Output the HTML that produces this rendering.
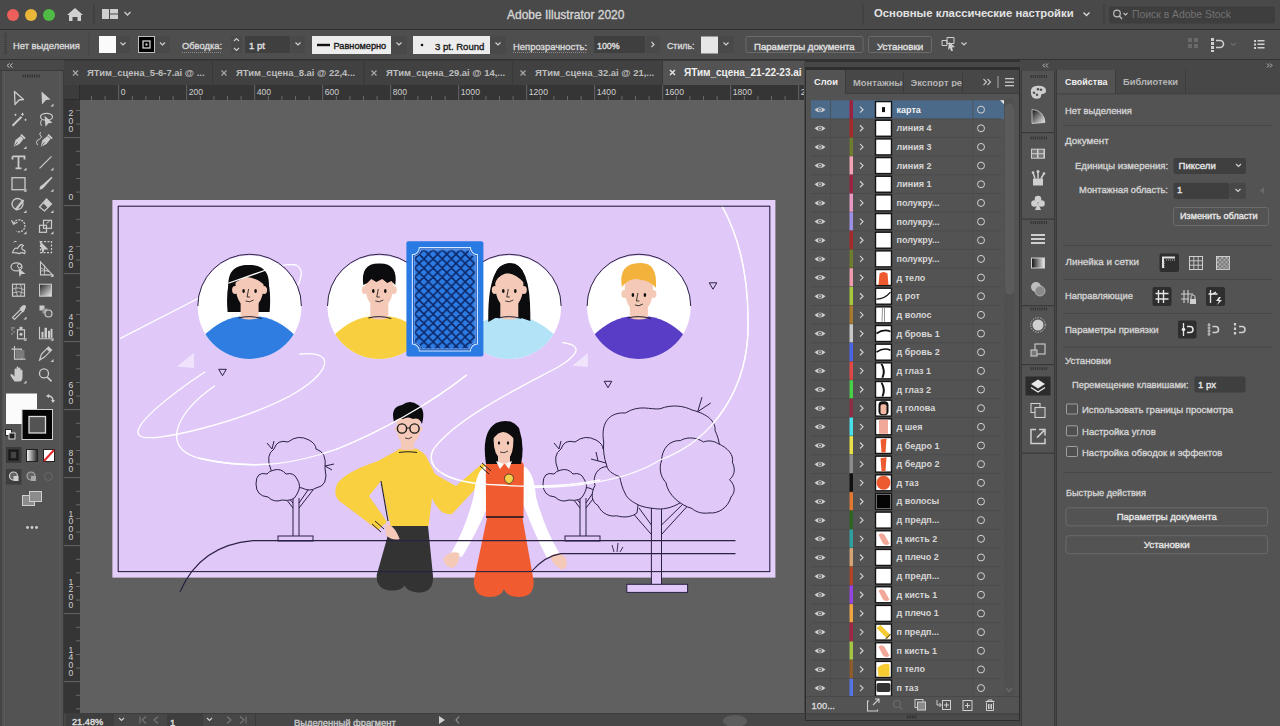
<!DOCTYPE html>
<html><head><meta charset="utf-8">
<style>
*{box-sizing:border-box}
html,body{margin:0;padding:0}
body{width:1280px;height:726px;overflow:hidden;position:relative;background:#535353;font-family:"Liberation Sans",sans-serif;color:#d6d6d6}
.a{position:absolute}
.t{position:absolute;white-space:nowrap;line-height:1}
.b{font-weight:bold}
svg{position:absolute;overflow:visible}
.sw{-webkit-text-stroke:0.35px currentColor}
.chev{position:absolute;width:5px;height:5px;border-right:1.3px solid #cfcfcf;border-bottom:1.3px solid #cfcfcf;transform:rotate(45deg)}
.inp{position:absolute;background:#3f3f3f;border-radius:2px}
.btn{position:absolute;border:1px solid #6a6a6a;border-radius:3px;background:#4c4c4c}
</style></head><body>


<!-- TITLE BAR -->
<div class="a" style="left:0;top:0;width:1280px;height:30px;background:#494949;border-bottom:1px solid #2e2e2e"></div>
<div class="a" style="left:7px;top:9px;width:12px;height:12px;border-radius:50%;background:#ec5f5b"></div>
<div class="a" style="left:25px;top:9px;width:12px;height:12px;border-radius:50%;background:#e8b73a"></div>
<div class="a" style="left:43px;top:9px;width:12px;height:12px;border-radius:50%;background:#4fbb45"></div>
<svg style="left:0;top:0" width="1280" height="30">
  <path d="M67 15 L75 8 L83 15 L81 15 L81 21 L77.5 21 L77.5 17 L72.5 17 L72.5 21 L69 21 L69 15 Z" fill="#d0d0d0"/>
  <rect x="93.5" y="5" width="1" height="20" fill="#3a3a3a"/>
  <rect x="102" y="9" width="7" height="10" fill="#cfcfcf"/>
  <rect x="110" y="9" width="8" height="4.5" fill="#cfcfcf"/>
  <rect x="110" y="14.5" width="8" height="4.5" fill="#cfcfcf"/>
  <path d="M124.5 12 L127.5 15 L130.5 12" stroke="#cfcfcf" stroke-width="1.3" fill="none"/>
  <rect x="862.5" y="4" width="1" height="21" fill="#3c3c3c"/>
  <path d="M1083.5 12.5 L1086.5 15.5 L1089.5 12.5" stroke="#d8d8d8" stroke-width="1.4" fill="none"/>
  <rect x="1103.5" y="4" width="1" height="21" fill="#3c3c3c"/>
  <rect x="1109" y="6.5" width="166" height="17" rx="2" fill="#3e3e3e"/>
  <circle cx="1117" cy="13.5" r="3.3" stroke="#bdbdbd" stroke-width="1.2" fill="none"/>
  <path d="M1119.3 16 L1122 19" stroke="#bdbdbd" stroke-width="1.3"/>
  <path d="M1123.5 13 L1125.5 15 L1127.5 13" stroke="#bdbdbd" stroke-width="1.1" fill="none"/>
</svg>
<div class="t sw" style="left:507px;top:9px;font-size:12px;color:#d4d4d4">Adobe Illustrator 2020</div>
<div class="t b" style="left:874px;top:8px;font-size:11.3px;color:#e2e2e2">Основные классические настройки</div>
<div class="t" style="left:1132px;top:10px;font-size:10.4px;color:#727272">Поиск в Adobe Stock</div>

<!-- CONTROL BAR -->
<div class="a" style="left:0;top:30px;width:1280px;height:29px;background:#4e4e4e"></div>
<svg style="left:0;top:30px" width="1280" height="29">
  <g fill="#3e3e3e"><rect x="4" y="3.0" width="3" height="1.1"/><rect x="4" y="5.2" width="3" height="1.1"/><rect x="4" y="7.4" width="3" height="1.1"/><rect x="4" y="9.6" width="3" height="1.1"/><rect x="4" y="11.8" width="3" height="1.1"/><rect x="4" y="14.0" width="3" height="1.1"/><rect x="4" y="16.2" width="3" height="1.1"/><rect x="4" y="18.4" width="3" height="1.1"/><rect x="4" y="20.6" width="3" height="1.1"/><rect x="4" y="22.8" width="3" height="1.1"/></g>
  <rect x="88.5" y="3" width="1" height="23" fill="#444"/>
  <!-- fill swatch -->
  <rect x="99" y="6" width="17" height="17" fill="#fafafa"/>
  <rect x="116" y="6" width="14" height="17" fill="#494949"/>
  <path d="M120.5 12.5 L123 15 L125.5 12.5" stroke="#cfcfcf" stroke-width="1.2" fill="none"/>
  <!-- stroke swatch -->
  <rect x="138.5" y="6.5" width="16" height="16" fill="#000" stroke="#bdbdbd" stroke-width="1"/>
  <rect x="143" y="11" width="7" height="7" fill="none" stroke="#e0e0e0" stroke-width="1.2"/>
  <rect x="145.5" y="13.5" width="2" height="2" fill="#e0e0e0"/>
  <rect x="155" y="6" width="15" height="17" fill="#494949"/>
  <path d="M160 12.5 L162.5 15 L165 12.5" stroke="#cfcfcf" stroke-width="1.2" fill="none"/>
  <!-- Обводка underline -->
  <line x1="182" y1="22.5" x2="222" y2="22.5" stroke="#8a8a8a" stroke-width="1" stroke-dasharray="1 1"/>
  <!-- stepper -->
  <rect x="231" y="6" width="11" height="17" fill="#494949"/>
  <path d="M234 11 L236.5 8.5 L239 11 M234 18 L236.5 20.5 L239 18" stroke="#cfcfcf" stroke-width="1.1" fill="none"/>
  <rect x="245" y="6" width="45" height="17" fill="#3f3f3f"/>
  <rect x="291" y="6" width="14" height="17" fill="#494949"/>
  <path d="M295.5 12.5 L298 15 L300.5 12.5" stroke="#cfcfcf" stroke-width="1.2" fill="none"/>
  <!-- Равномерно -->
  <rect x="312" y="6" width="79" height="18" fill="#ececec"/>
  <rect x="317" y="13.8" width="13" height="2.4" fill="#111"/>
  <rect x="391" y="6" width="16" height="18" fill="#494949"/>
  <path d="M396.5 12.5 L399 15 L401.5 12.5" stroke="#cfcfcf" stroke-width="1.2" fill="none"/>
  <!-- 3 pt round -->
  <rect x="413" y="6" width="77" height="18" fill="#ececec"/>
  <circle cx="422" cy="15" r="1.3" fill="#111"/>
  <rect x="490" y="6" width="16" height="18" fill="#494949"/>
  <path d="M495.5 12.5 L498 15 L500.5 12.5" stroke="#cfcfcf" stroke-width="1.2" fill="none"/>
  <line x1="513" y1="22.5" x2="587" y2="22.5" stroke="#8a8a8a" stroke-width="1" stroke-dasharray="1 1"/>
  <rect x="594" y="6" width="51" height="17" fill="#3f3f3f"/>
  <rect x="646" y="6" width="14" height="17" fill="#494949"/>
  <path d="M651.5 12 L654 14.5 L651.5 17" stroke="#cfcfcf" stroke-width="1.2" fill="none"/>
  <!-- style -->
  <rect x="701" y="6.5" width="17" height="17" fill="#e6e6e6"/>
  <rect x="718" y="6" width="16" height="17" fill="#494949"/>
  <path d="M723.5 12.5 L726 15 L728.5 12.5" stroke="#cfcfcf" stroke-width="1.2" fill="none"/>
  <!-- buttons -->
  <rect x="746" y="6.5" width="117" height="16" rx="2" fill="none" stroke="#6b6b6b"/>
  <rect x="868.5" y="6.5" width="63" height="16" rx="2" fill="none" stroke="#6b6b6b"/>
  <!-- icon -->
  <path d="M942 10.5 h5 v5 h-5z M947 7.5 h7 v6 h-7z" stroke="#cfcfcf" stroke-width="1" fill="none"/>
  <path d="M949 12 L955 17 L952 17.5 L953 21 L951 21 L950 18 L948 20 Z" fill="#cfcfcf"/>
  <path d="M961.5 12.5 L964 15 L966.5 12.5" stroke="#cfcfcf" stroke-width="1.2" fill="none"/>
  <!-- right icons -->
  <g fill="#6a6a6a"><rect x="1188" y="8" width="4" height="4"/><rect x="1194" y="8" width="4" height="4"/><rect x="1188" y="14" width="4" height="4"/><rect x="1194" y="14" width="4" height="4"/></g>
  <g fill="#cfcfcf"><rect x="1211" y="8" width="3" height="3"/><rect x="1211" y="12" width="3" height="3"/><rect x="1211" y="16" width="3" height="3"/><rect x="1211" y="20" width="3" height="2"/></g>
  <path d="M1216 10.5 h4 a3.5 3.5 0 0 1 0 7 h-4" stroke="#cfcfcf" stroke-width="1.6" fill="none"/>
  <path d="M1231 13 L1233.5 15.5 L1236 13" stroke="#6a6a6a" stroke-width="1.2" fill="none"/>
  <g fill="#cfcfcf"><rect x="1254" y="10" width="2" height="2"/><rect x="1254" y="13.5" width="2" height="2"/><rect x="1254" y="17" width="2" height="2"/><rect x="1257.5" y="10" width="7" height="1.5"/><rect x="1257.5" y="13.5" width="7" height="1.5"/><rect x="1257.5" y="17" width="7" height="1.5"/></g>
</svg>
<div class="t sw" style="left:13px;top:40.5px;font-size:9.4px;color:#d8d8d8">Нет выделения</div>
<div class="t sw" style="left:182px;top:41.5px;font-size:9.35px;color:#d8d8d8">Обводка:</div>
<div class="t sw" style="left:249px;top:41px;font-size:9.5px;color:#e0e0e0">1 pt</div>
<div class="t sw" style="left:333.5px;top:41.5px;font-size:9.2px;color:#1a1a1a">Равномерно</div>
<div class="t sw" style="left:435px;top:41.5px;font-size:9.55px;color:#1a1a1a">3 pt. Round</div>
<div class="t sw" style="left:513px;top:41.5px;font-size:9.45px;color:#d8d8d8">Непрозрачность:</div>
<div class="t sw" style="left:597px;top:41.5px;font-size:8.9px;color:#e0e0e0">100%</div>
<div class="t sw" style="left:667px;top:41.5px;font-size:8.8px;color:#d8d8d8">Стиль:</div>
<div class="t sw" style="left:754px;top:41.5px;font-size:9.6px;color:#e0e0e0">Параметры документа</div>
<div class="t sw" style="left:877px;top:41.5px;font-size:9.85px;color:#e0e0e0">Установки</div>


<!-- dark strip -->
<div class="a" style="left:0;top:59px;width:1280px;height:3px;background:#323232"></div>
<div class="a" style="left:0;top:60px;width:64px;height:666px;background:#535353;border-left:2px solid #454545;border-right:1px solid #3c3c3c"></div>
<div class="a" style="left:0;top:60px;width:64px;height:11px;background:#484848;border-bottom:1px solid #3a3a3a"></div>
<div class="a" style="left:4px;top:71px;width:1px;height:655px;background:#5a5a5a"></div>
<div class="a" style="left:59px;top:71px;width:1px;height:655px;background:#5a5a5a"></div>
<svg style="left:0;top:0" width="64" height="726"><path d="M9.5 63.5 L7 65.5 L9.5 67.5 M12.5 63.5 L10 65.5 L12.5 67.5" stroke="#bdbdbd" stroke-width="1" fill="none"/><rect x="22.5" y="74.5" width="1.1" height="3" fill="#2e2e2e"/><rect x="24.8" y="74.5" width="1.1" height="3" fill="#2e2e2e"/><rect x="27.1" y="74.5" width="1.1" height="3" fill="#2e2e2e"/><rect x="29.4" y="74.5" width="1.1" height="3" fill="#2e2e2e"/><rect x="31.7" y="74.5" width="1.1" height="3" fill="#2e2e2e"/><rect x="34.0" y="74.5" width="1.1" height="3" fill="#2e2e2e"/><rect x="36.3" y="74.5" width="1.1" height="3" fill="#2e2e2e"/><rect x="38.6" y="74.5" width="1.1" height="3" fill="#2e2e2e"/><path d="M14.5 91.5 L23.5 99.5 L19.0 100.0 L15.0 104.5 Z" stroke="#cbcbcb" stroke-width="1.3" fill="none" stroke-linejoin="round"/><path d="M41.5 91.5 L50.5 99.5 L46.0 100.0 L42.0 104.5 Z" fill="#cbcbcb"/><path d="M50.5 106.5 L53.5 106.5 L53.5 103.5 Z" fill="#cbcbcb"/><path d="M12.5 125.8 L21.5 116.8" stroke="#cbcbcb" stroke-width="2"/><path d="M22.5 112.8 v3 M21.0 114.3 h3 M15.5 113.8 v2 M14.5 114.8 h2 M25.5 118.8 v2 M24.5 119.8 h2" stroke="#cbcbcb" stroke-width="1"/><ellipse cx="46.5" cy="116.8" rx="6" ry="3.5" stroke="#cbcbcb" stroke-width="1.2" fill="none"/><path d="M44.5 115.8 L52.5 122.8 L48.5 123.3 L45.5 126.8 Z" fill="#cbcbcb"/><path d="M41.5 119.8 q-2 3 0 6" stroke="#cbcbcb" stroke-width="1" fill="none"/><path d="M13.5 147.1 L15.5 140.1 L20.5 136.1 L23.5 139.1 L19.5 144.1 Z" fill="#cbcbcb"/><path d="M21.0 134.6 L25.0 138.6" stroke="#cbcbcb" stroke-width="2"/><path d="M13.5 147.1 L17.5 142.1" stroke="#535353" stroke-width="0.8"/><path d="M40.5 147.1 L42.5 140.1 L47.5 136.1 L50.5 139.1 L46.5 144.1 Z" fill="#cbcbcb"/><path d="M48.0 134.6 L52.0 138.6" stroke="#cbcbcb" stroke-width="2"/><path d="M40.5 147.1 L44.5 142.1" stroke="#535353" stroke-width="0.8"/><path d="M23.5 149.1 L26.5 149.1 L26.5 146.1 Z" fill="#cbcbcb"/><path d="M41.5 137.1 q-3 -3 -1 -5 M41.5 137.1 q-2 3 -4 3 q-2 2 0 5" stroke="#cbcbcb" stroke-width="1" fill="none"/><path d="M12.5 156.4 h12 v3 M12.5 156.4 v3 M18.5 156.4 v12 M15.5 168.4 h6" stroke="#cbcbcb" stroke-width="1.8" fill="none"/><path d="M23.5 170.4 L26.5 170.4 L26.5 167.4 Z" fill="#cbcbcb"/><path d="M39.5 168.4 L51.5 156.4" stroke="#cbcbcb" stroke-width="1.3"/><path d="M50.5 170.4 L53.5 170.4 L53.5 167.4 Z" fill="#cbcbcb"/><rect x="12.0" y="177.7" width="13" height="12" stroke="#cbcbcb" stroke-width="1.3" fill="#5a5a5a"/><path d="M23.5 191.7 L26.5 191.7 L26.5 188.7 Z" fill="#cbcbcb"/><path d="M39.5 189.7 q0 -4 3 -5 L51.5 176.7 L52.5 177.7 L44.5 186.7 q-2 3 -5 3z" fill="#cbcbcb"/><path d="M50.5 191.7 L53.5 191.7 L53.5 188.7 Z" fill="#cbcbcb"/><circle cx="17.5" cy="204" r="5.5" stroke="#cbcbcb" stroke-width="1.3" fill="#5a5a5a"/><path d="M15.5 210 L23.5 200" stroke="#cbcbcb" stroke-width="2.2"/><path d="M23.5 213 L26.5 213 L26.5 210 Z" fill="#cbcbcb"/><path d="M39.5 207 L46.5 199 L51.5 204 L44.5 211 Z" stroke="#cbcbcb" stroke-width="1.2" fill="none"/><path d="M43.0 203 L46.5 199 L51.5 204 L48.0 208 Z" fill="#cbcbcb"/><path d="M50.5 213 L53.5 213 L53.5 210 Z" fill="#cbcbcb"/><path d="M13.5 223.3 A6 6 0 1 1 16.5 231.3" stroke="#cbcbcb" stroke-width="1.3" fill="none" stroke-dasharray="2 1"/><path d="M11.5 220.3 L13.5 224.3 L17.5 222.3" stroke="#cbcbcb" stroke-width="1.2" fill="none"/><path d="M23.5 234.3 L26.5 234.3 L26.5 231.3 Z" fill="#cbcbcb"/><rect x="39.5" y="225.3" width="7" height="7" stroke="#cbcbcb" stroke-width="1.2" fill="none"/><rect x="43.5" y="220.3" width="8" height="8" stroke="#cbcbcb" stroke-width="1.2" fill="none"/><path d="M46.5 223.3 L49.5 221.3" stroke="#cbcbcb" stroke-width="1"/><path d="M50.5 234.3 L53.5 234.3 L53.5 231.3 Z" fill="#cbcbcb"/><path d="M12.5 252.6 q2 -6 5 -4 q3 -6 6 -3 q-3 2 -1 4 q4 1 2 4 q-3 -2 -5 0 q-2 -1 -7 -1z" stroke="#cbcbcb" stroke-width="1.2" fill="none"/><path d="M16.5 241.6 q-2 -1 -3 1" stroke="#cbcbcb" stroke-width="1" fill="none"/><rect x="40.5" y="241.6" width="11" height="11" stroke="#cbcbcb" stroke-width="1.2" fill="none" stroke-dasharray="2 1.5"/><path d="M39.5 240.6 L48.5 249.6 L44.5 249.6 L42.5 253.6 Z" fill="#cbcbcb"/><ellipse cx="16.5" cy="266.9" rx="5.5" ry="4" stroke="#cbcbcb" stroke-width="1.2" fill="none"/><circle cx="19.5" cy="265.9" r="2" stroke="#cbcbcb" stroke-width="1" fill="none"/><path d="M18.5 267.9 L25.5 273.9 L21.5 273.9 L19.5 276.9 Z" fill="#cbcbcb"/><path d="M40.5 261.9 L40.5 274.9 L52.5 274.9 Z" stroke="#cbcbcb" stroke-width="1.1" fill="none"/><path d="M40.5 267.9 L49.5 271.9 M44.5 264.9 v10 M40.5 270.9 h8" stroke="#cbcbcb" stroke-width="0.8"/><path d="M50.5 276.9 L53.5 276.9 L53.5 273.9 Z" fill="#cbcbcb"/><rect x="12.5" y="284.2" width="12" height="12" stroke="#cbcbcb" stroke-width="1.2" fill="none"/><path d="M12.5 289.2 q6 -3 12 1 M12.5 293.2 q6 -3 12 0 M16.5 284.2 q-2 6 1 12 M20.5 284.2 q3 6 0 12" stroke="#cbcbcb" stroke-width="0.8" fill="none"/><defs><linearGradient id="tg" x1="0" y1="0" x2="1" y2="1"><stop offset="0" stop-color="#222"/><stop offset="1" stop-color="#eee"/></linearGradient></defs><rect x="39.5" y="284.2" width="12" height="12" stroke="#cbcbcb" stroke-width="1" fill="url(#tg)"/><path d="M12.5 317.5 L20.5 309.5 L22.5 311.5 L14.5 319.5 Z" stroke="#cbcbcb" stroke-width="1.1" fill="none"/><path d="M19.5 308.5 L22.5 305.5 q2 -1 3 0 q1 1 0 3 L23.5 312.5Z" fill="#cbcbcb"/><path d="M23.5 319.5 L26.5 319.5 L26.5 316.5 Z" fill="#cbcbcb"/><rect x="39.5" y="305.5" width="5" height="5" fill="#cbcbcb"/><rect x="42.5" y="308.5" width="5" height="5" fill="#9a9a9a"/><circle cx="48.5" cy="313.5" r="3.5" stroke="#cbcbcb" stroke-width="1.2" fill="#5a5a5a"/><rect x="17.5" y="329.8" width="7" height="9" stroke="#cbcbcb" stroke-width="1.2" fill="none"/><circle cx="21.0" cy="334.3" r="1.5" fill="#cbcbcb"/><rect x="19.5" y="326.8" width="3" height="3" fill="#cbcbcb"/><path d="M11.5 327.8 h1 M13.5 327.8 h1 M11.5 329.8 h1 M13.5 331.8 h1 M11.5 333.8 h1" stroke="#cbcbcb" stroke-width="1.2"/><path d="M23.5 340.8 L26.5 340.8 L26.5 337.8 Z" fill="#cbcbcb"/><path d="M39.5 326.8 v12 h13" stroke="#cbcbcb" stroke-width="1.1" fill="none"/><rect x="41.5" y="331.8" width="2" height="6" fill="#cbcbcb"/><rect x="44.5" y="327.8" width="2.5" height="10" fill="#cbcbcb"/><rect x="48.0" y="330.8" width="2" height="7" fill="#cbcbcb"/><rect x="50.5" y="328.8" width="2" height="9" fill="#cbcbcb"/><path d="M50.5 340.8 L53.5 340.8 L53.5 337.8 Z" fill="#cbcbcb"/><path d="M14.5 346.1 v13 h11 M11.5 349.1 h10 v10" stroke="#cbcbcb" stroke-width="1.1" fill="none"/><rect x="15.5" y="350.1" width="9" height="8" fill="#7a7a7a"/><path d="M39.5 360.1 L41.5 354.1 L48.5 347.1 L51.5 350.1 L44.5 357.1 Z" stroke="#cbcbcb" stroke-width="1.2" fill="none"/><path d="M46.5 349.1 L49.5 352.1 L51.5 350.1 L48.5 347.1Z" fill="#cbcbcb"/><path d="M50.5 362.1 L53.5 362.1 L53.5 359.1 Z" fill="#cbcbcb"/><path d="M14.5 381.4 q-3 -4 -4 -6 q0 -2 2 -1 l2 2 v-7 q1 -2 2 0 v5 v-7 q1 -2 2 0 v7 v-6 q1 -2 2 0 v6 v-4 q1 -2 2 0 v6 q0 5 -3 5z" fill="#cbcbcb"/><path d="M23.5 383.4 L26.5 383.4 L26.5 380.4 Z" fill="#cbcbcb"/><circle cx="44.0" cy="373.4" r="4.5" stroke="#cbcbcb" stroke-width="1.3" fill="none"/><path d="M47.0 376.9 L51.5 381.4" stroke="#cbcbcb" stroke-width="1.6"/><rect x="6" y="393.5" width="31" height="30.5" fill="#fbfbfb"/><rect x="22" y="409.5" width="30.5" height="30" fill="#050505" stroke="#cfcfcf" stroke-width="1"/><rect x="29" y="416.5" width="16.5" height="16.5" fill="#535353" stroke="#dcdcdc" stroke-width="1.3"/><path d="M48 396 q5 0 5 5" stroke="#cfcfcf" stroke-width="1.3" fill="none"/><path d="M46 396 l3 -2 v4z M53 403 l-2 -3 h4z" fill="#cfcfcf"/><rect x="5.5" y="429.5" width="6" height="6" fill="#fff" stroke="#222" stroke-width="1"/><rect x="9" y="433" width="6" height="6" fill="#222" stroke="#ddd" stroke-width="1"/><rect x="6" y="447" width="15.5" height="16" fill="#3a3a3a"/><rect x="9" y="450" width="9" height="10" fill="#222" stroke="#111"/><rect x="11" y="452" width="5" height="6" fill="#444"/><defs><linearGradient id="tg2" x1="0" y1="0" x2="1" y2="0"><stop offset="0" stop-color="#fff"/><stop offset="1" stop-color="#222"/></linearGradient></defs><rect x="26.5" y="449.5" width="11" height="12" fill="url(#tg2)" stroke="#222" stroke-width="1"/><rect x="43.5" y="449.5" width="11" height="12" fill="#fff" stroke="#222" stroke-width="1"/><path d="M44 461 L54 450" stroke="#e0282e" stroke-width="2"/><rect x="6" y="469" width="15.5" height="15.5" fill="#3e3e3e"/><circle cx="13.5" cy="476" r="4" stroke="#cfcfcf" stroke-width="1.2" fill="#666"/><rect x="13.5" y="476" width="5" height="5" fill="#cfcfcf"/><circle cx="31" cy="476" r="4" stroke="#a8a8a8" stroke-width="1.2" fill="#666"/><rect x="31" y="476" width="5" height="5" fill="#a8a8a8"/><circle cx="48.5" cy="476.5" r="4" stroke="#6a6a6a" stroke-width="1" fill="none"/><rect x="22.5" y="495.5" width="12" height="10" fill="#8c8c8c" stroke="#cfcfcf" stroke-width="1"/><rect x="29.5" y="491.5" width="12" height="10" fill="#8c8c8c" stroke="#cfcfcf" stroke-width="1"/><circle cx="27.5" cy="527.5" r="1.4" fill="#d0d0d0"/><circle cx="32" cy="527.5" r="1.4" fill="#d0d0d0"/><circle cx="36.5" cy="527.5" r="1.4" fill="#d0d0d0"/></svg>
<div class="a" style="left:64px;top:60px;width:741px;height:25px;background:#414141;border-top:1px solid #3a3a3a"></div>
<div class="a" style="left:662px;top:61px;width:143px;height:24px;background:#535353"></div>
<div class="t b" style="left:87px;top:68px;font-size:9.45px;color:#bdbdbd">ЯТим_сцена_5-6-7.ai @ ...</div>
<div class="t b" style="left:236px;top:68px;font-size:9.45px;color:#bdbdbd">ЯТим_сцена_8.ai @ 22,4...</div>
<div class="t b" style="left:386px;top:68px;font-size:9.45px;color:#bdbdbd">ЯТим_сцена_29.ai @ 14,...</div>
<div class="t b" style="left:535px;top:68px;font-size:9.45px;color:#bdbdbd">ЯТим_сцена_32.ai @ 21,...</div>
<div class="t b" style="left:684px;top:67.5px;font-size:10px;color:#efefef">ЯТим_сцена_21-22-23.ai</div>
<svg style="left:0;top:0" width="1280" height="100"><path d="M73.0 70.5 L78.0 75.5 M78.0 70.5 L73.0 75.5" stroke="#a8a8a8" stroke-width="1.2"/><rect x="212.0" y="61" width="1" height="24" fill="#383838"/><path d="M221.5 70.5 L226.5 75.5 M226.5 70.5 L221.5 75.5" stroke="#a8a8a8" stroke-width="1.2"/><rect x="363.5" y="61" width="1" height="24" fill="#383838"/><path d="M371.5 70.5 L376.5 75.5 M376.5 70.5 L371.5 75.5" stroke="#a8a8a8" stroke-width="1.2"/><rect x="512.0" y="61" width="1" height="24" fill="#383838"/><path d="M520.5 70.5 L525.5 75.5 M525.5 70.5 L520.5 75.5" stroke="#a8a8a8" stroke-width="1.2"/><rect x="662.0" y="61" width="1" height="24" fill="#383838"/><path d="M670 70 L675 75 M675 70 L670 75" stroke="#e8e8e8" stroke-width="1.4"/></svg>
<div class="a" style="left:64px;top:85px;width:741px;height:15px;background:#353535"></div>
<div class="a" style="left:64px;top:85px;width:16px;height:628px;background:#353535"></div>
<div class="a" style="left:64px;top:85px;width:16px;height:15px;background:#3c3c3c;border-right:1px solid #2c2c2c;border-bottom:1px solid #2c2c2c"></div>
<div class="t" style="left:120.8px;top:88px;font-size:8.6px;color:#d0d0d0">0</div>
<div class="t" style="left:188.8px;top:88px;font-size:8.6px;color:#d0d0d0">200</div>
<div class="t" style="left:256.8px;top:88px;font-size:8.6px;color:#d0d0d0">400</div>
<div class="t" style="left:324.8px;top:88px;font-size:8.6px;color:#d0d0d0">600</div>
<div class="t" style="left:392.8px;top:88px;font-size:8.6px;color:#d0d0d0">800</div>
<div class="t" style="left:460.8px;top:88px;font-size:8.6px;color:#d0d0d0">1000</div>
<div class="t" style="left:528.8px;top:88px;font-size:8.6px;color:#d0d0d0">1200</div>
<div class="t" style="left:596.8px;top:88px;font-size:8.6px;color:#d0d0d0">1400</div>
<div class="t" style="left:664.8px;top:88px;font-size:8.6px;color:#d0d0d0">1600</div>
<div class="t" style="left:732.8px;top:88px;font-size:8.6px;color:#d0d0d0">1800</div>
<div class="t" style="left:800.8px;top:88px;font-size:8.6px;color:#d0d0d0">2000</div>
<div class="a" style="left:67px;top:110.4px;width:8px;font-size:8.6px;line-height:7.6px;color:#d0d0d0;text-align:center">2<br>0<br>0</div>
<div class="a" style="left:67px;top:193.6px;width:8px;font-size:8.6px;line-height:7.6px;color:#d0d0d0;text-align:center">0</div>
<div class="a" style="left:67px;top:246.4px;width:8px;font-size:8.6px;line-height:7.6px;color:#d0d0d0;text-align:center">2<br>0<br>0</div>
<div class="a" style="left:67px;top:314.4px;width:8px;font-size:8.6px;line-height:7.6px;color:#d0d0d0;text-align:center">4<br>0<br>0</div>
<div class="a" style="left:67px;top:382.4px;width:8px;font-size:8.6px;line-height:7.6px;color:#d0d0d0;text-align:center">6<br>0<br>0</div>
<div class="a" style="left:67px;top:450.4px;width:8px;font-size:8.6px;line-height:7.6px;color:#d0d0d0;text-align:center">8<br>0<br>0</div>
<div class="a" style="left:67px;top:510.8px;width:8px;font-size:8.6px;line-height:7.6px;color:#d0d0d0;text-align:center">1<br>0<br>0<br>0</div>
<div class="a" style="left:67px;top:578.8px;width:8px;font-size:8.6px;line-height:7.6px;color:#d0d0d0;text-align:center">1<br>2<br>0<br>0</div>
<div class="a" style="left:67px;top:646.8px;width:8px;font-size:8.6px;line-height:7.6px;color:#d0d0d0;text-align:center">1<br>4<br>0<br>0</div>
<svg style="left:0;top:0" width="1280" height="726"><rect x="91.05" y="96" width="0.9" height="4" fill="#707070"/><rect x="104.65" y="96" width="0.9" height="4" fill="#707070"/><rect x="118.25" y="85" width="0.9" height="15" fill="#6a6a6a"/><rect x="131.85" y="96" width="0.9" height="4" fill="#707070"/><rect x="145.45" y="96" width="0.9" height="4" fill="#707070"/><rect x="159.05" y="96" width="0.9" height="4" fill="#707070"/><rect x="172.65" y="96" width="0.9" height="4" fill="#707070"/><rect x="186.25" y="85" width="0.9" height="15" fill="#6a6a6a"/><rect x="199.85" y="96" width="0.9" height="4" fill="#707070"/><rect x="213.45" y="96" width="0.9" height="4" fill="#707070"/><rect x="227.05" y="96" width="0.9" height="4" fill="#707070"/><rect x="240.65" y="96" width="0.9" height="4" fill="#707070"/><rect x="254.25" y="85" width="0.9" height="15" fill="#6a6a6a"/><rect x="267.85" y="96" width="0.9" height="4" fill="#707070"/><rect x="281.45" y="96" width="0.9" height="4" fill="#707070"/><rect x="295.05" y="96" width="0.9" height="4" fill="#707070"/><rect x="308.65" y="96" width="0.9" height="4" fill="#707070"/><rect x="322.25" y="85" width="0.9" height="15" fill="#6a6a6a"/><rect x="335.85" y="96" width="0.9" height="4" fill="#707070"/><rect x="349.45" y="96" width="0.9" height="4" fill="#707070"/><rect x="363.05" y="96" width="0.9" height="4" fill="#707070"/><rect x="376.65" y="96" width="0.9" height="4" fill="#707070"/><rect x="390.25" y="85" width="0.9" height="15" fill="#6a6a6a"/><rect x="403.85" y="96" width="0.9" height="4" fill="#707070"/><rect x="417.45" y="96" width="0.9" height="4" fill="#707070"/><rect x="431.05" y="96" width="0.9" height="4" fill="#707070"/><rect x="444.65" y="96" width="0.9" height="4" fill="#707070"/><rect x="458.25" y="85" width="0.9" height="15" fill="#6a6a6a"/><rect x="471.85" y="96" width="0.9" height="4" fill="#707070"/><rect x="485.45" y="96" width="0.9" height="4" fill="#707070"/><rect x="499.05" y="96" width="0.9" height="4" fill="#707070"/><rect x="512.65" y="96" width="0.9" height="4" fill="#707070"/><rect x="526.25" y="85" width="0.9" height="15" fill="#6a6a6a"/><rect x="539.85" y="96" width="0.9" height="4" fill="#707070"/><rect x="553.45" y="96" width="0.9" height="4" fill="#707070"/><rect x="567.05" y="96" width="0.9" height="4" fill="#707070"/><rect x="580.65" y="96" width="0.9" height="4" fill="#707070"/><rect x="594.25" y="85" width="0.9" height="15" fill="#6a6a6a"/><rect x="607.85" y="96" width="0.9" height="4" fill="#707070"/><rect x="621.45" y="96" width="0.9" height="4" fill="#707070"/><rect x="635.05" y="96" width="0.9" height="4" fill="#707070"/><rect x="648.65" y="96" width="0.9" height="4" fill="#707070"/><rect x="662.25" y="85" width="0.9" height="15" fill="#6a6a6a"/><rect x="675.85" y="96" width="0.9" height="4" fill="#707070"/><rect x="689.45" y="96" width="0.9" height="4" fill="#707070"/><rect x="703.05" y="96" width="0.9" height="4" fill="#707070"/><rect x="716.65" y="96" width="0.9" height="4" fill="#707070"/><rect x="730.25" y="85" width="0.9" height="15" fill="#6a6a6a"/><rect x="743.85" y="96" width="0.9" height="4" fill="#707070"/><rect x="757.45" y="96" width="0.9" height="4" fill="#707070"/><rect x="771.05" y="96" width="0.9" height="4" fill="#707070"/><rect x="784.65" y="96" width="0.9" height="4" fill="#707070"/><rect x="798.25" y="85" width="0.9" height="15" fill="#6a6a6a"/><rect x="76" y="110.00" width="4" height="0.9" fill="#707070"/><rect x="76" y="123.60" width="4" height="0.9" fill="#707070"/><rect x="64" y="137.20" width="16" height="0.9" fill="#6a6a6a"/><rect x="76" y="150.80" width="4" height="0.9" fill="#707070"/><rect x="76" y="164.40" width="4" height="0.9" fill="#707070"/><rect x="76" y="178.00" width="4" height="0.9" fill="#707070"/><rect x="76" y="191.60" width="4" height="0.9" fill="#707070"/><rect x="64" y="205.20" width="16" height="0.9" fill="#6a6a6a"/><rect x="76" y="218.80" width="4" height="0.9" fill="#707070"/><rect x="76" y="232.40" width="4" height="0.9" fill="#707070"/><rect x="76" y="246.00" width="4" height="0.9" fill="#707070"/><rect x="76" y="259.60" width="4" height="0.9" fill="#707070"/><rect x="64" y="273.20" width="16" height="0.9" fill="#6a6a6a"/><rect x="76" y="286.80" width="4" height="0.9" fill="#707070"/><rect x="76" y="300.40" width="4" height="0.9" fill="#707070"/><rect x="76" y="314.00" width="4" height="0.9" fill="#707070"/><rect x="76" y="327.60" width="4" height="0.9" fill="#707070"/><rect x="64" y="341.20" width="16" height="0.9" fill="#6a6a6a"/><rect x="76" y="354.80" width="4" height="0.9" fill="#707070"/><rect x="76" y="368.40" width="4" height="0.9" fill="#707070"/><rect x="76" y="382.00" width="4" height="0.9" fill="#707070"/><rect x="76" y="395.60" width="4" height="0.9" fill="#707070"/><rect x="64" y="409.20" width="16" height="0.9" fill="#6a6a6a"/><rect x="76" y="422.80" width="4" height="0.9" fill="#707070"/><rect x="76" y="436.40" width="4" height="0.9" fill="#707070"/><rect x="76" y="450.00" width="4" height="0.9" fill="#707070"/><rect x="76" y="463.60" width="4" height="0.9" fill="#707070"/><rect x="64" y="477.20" width="16" height="0.9" fill="#6a6a6a"/><rect x="76" y="490.80" width="4" height="0.9" fill="#707070"/><rect x="76" y="504.40" width="4" height="0.9" fill="#707070"/><rect x="76" y="518.00" width="4" height="0.9" fill="#707070"/><rect x="76" y="531.60" width="4" height="0.9" fill="#707070"/><rect x="64" y="545.20" width="16" height="0.9" fill="#6a6a6a"/><rect x="76" y="558.80" width="4" height="0.9" fill="#707070"/><rect x="76" y="572.40" width="4" height="0.9" fill="#707070"/><rect x="76" y="586.00" width="4" height="0.9" fill="#707070"/><rect x="76" y="599.60" width="4" height="0.9" fill="#707070"/><rect x="64" y="613.20" width="16" height="0.9" fill="#6a6a6a"/><rect x="76" y="626.80" width="4" height="0.9" fill="#707070"/><rect x="76" y="640.40" width="4" height="0.9" fill="#707070"/><rect x="76" y="654.00" width="4" height="0.9" fill="#707070"/><rect x="76" y="667.60" width="4" height="0.9" fill="#707070"/><rect x="64" y="681.20" width="16" height="0.9" fill="#6a6a6a"/><rect x="76" y="694.80" width="4" height="0.9" fill="#707070"/><rect x="76" y="708.40" width="4" height="0.9" fill="#707070"/></svg>
<div class="a" style="left:80px;top:100px;width:725px;height:613px;background:#606060"></div>
<div class="a" style="left:64px;top:713px;width:741px;height:13px;background:#474747;border-top:1px solid #3c3c3c"></div>
<svg style="left:0;top:0" width="1280" height="726"><rect x="66" y="714" width="48" height="12" fill="#3e3e3e"/><path d="M119 718 L121.5 720.5 L124 718" stroke="#cfcfcf" stroke-width="1.1" fill="none"/><path d="M140 716.5 v7 M146 716.5 L142 720 L146 723.5 M158 716.5 L154 720 L158 723.5" stroke="#777" stroke-width="1.1" fill="none"/><rect x="167" y="714" width="36" height="12" fill="#3e3e3e"/><path d="M207 718 L209.5 720.5 L212 718" stroke="#cfcfcf" stroke-width="1.1" fill="none"/><path d="M227 716.5 L231 720 L227 723.5 M240 716.5 L244 720 L240 723.5 M246 716.5 v7" stroke="#777" stroke-width="1.1" fill="none"/><rect x="255" y="714" width="1" height="12" fill="#3a3a3a"/><path d="M439 716 L445 720 L439 724 Z" fill="#d0d0d0"/><path d="M459 716.5 L456 720 L459 723.5" stroke="#999" stroke-width="1.1" fill="none"/><ellipse cx="735" cy="721" rx="12" ry="6" fill="#5d5d5d"/></svg>
<div class="t sw" style="left:72px;top:718px;font-size:9.2px;color:#e0e0e0">21.48%</div>
<div class="t sw" style="left:170px;top:718px;font-size:9.5px;color:#e0e0e0">1</div>
<div class="t sw" style="left:294px;top:718px;font-size:9.4px;color:#c8c8c8">Выделенный фрагмент</div>
<svg style="left:0;top:0" width="1280" height="726"><defs><clipPath id="c0"><circle cx="249.6" cy="307.2" r="51.8"/></clipPath><clipPath id="c1"><circle cx="379.3" cy="307.2" r="51.8"/></clipPath><clipPath id="c2"><circle cx="509.3" cy="307.2" r="51.8"/></clipPath><clipPath id="c3"><circle cx="638.9" cy="307.2" r="51.8"/></clipPath><pattern id="lat" width="9.2" height="9.2" patternUnits="userSpaceOnUse" x="410" y="245"><rect width="9.2" height="9.2" fill="#2b7be4"/><path d="M0 0 L9.2 9.2 M9.2 0 L0 9.2 M-1 8.2 L1 10.2 M8.2 -1 L10.2 1 M-1 1 L1 -1 M8.2 10.2 L10.2 8.2" stroke="#0c2463" stroke-width="1.5"/></pattern></defs><rect x="112.4" y="200" width="663" height="377.6" fill="#e4cffa"/><rect x="118.2" y="206.2" width="651.6" height="365.4" fill="#e0c8f9"/><path d="M120.4 338.3 L199 298" stroke="#ffffff" stroke-width="1.3" fill="none" stroke-linecap="round"/><path d="M229 283 L266 270 Q286 263 296 265 Q306 270 297 287" stroke="#ffffff" stroke-width="1.3" fill="none" stroke-linecap="round"/><path d="M204.8 372 C170 395 128 428 140 436 C152 444 240 422 290 396 C330 374 338 350 300 354" stroke="#ffffff" stroke-width="1.3" fill="none" stroke-linecap="round"/><path d="M214.6 386 C180 410 158 446 198 458 C258 472 300 462 337 449 C380 432 430 404 466.3 375.3" stroke="#ffffff" stroke-width="1.3" fill="none" stroke-linecap="round"/><path d="M562.6 342.6 C582 345 580 353 560 366 C525 385 455 418 433 450 C424 470 450 484 500 485 C560 492 625 482 660 460 C715 440 750 385 748 320 C748 270 738 235 722 206" stroke="#ffffff" stroke-width="1.3" fill="none" stroke-linecap="round"/><path d="M177 366.4 L193.9 353.1 L193.9 368 Z" fill="#efe4fc"/><path d="M572.4 365.7 L587.8 353.1 L587.8 367.1 Z" fill="#efe4fc"/><path d="M218.7 369.3 L226.3 369.3 L222.5 375.7 Z" stroke="#2b2142" stroke-width="1" fill="none" stroke-linejoin="round"/><path d="M604.2 381.3 L611.8 381.3 L608 387.7 Z" stroke="#2b2142" stroke-width="1" fill="none" stroke-linejoin="round"/><path d="M709.2 282.8 L716.8 282.8 L713 289.2 Z" stroke="#2b2142" stroke-width="1" fill="none" stroke-linejoin="round"/><circle cx="249.6" cy="307.2" r="51.8" fill="#ffffff"/><g clip-path="url(#c0)"><path d="M191.6 350 Q213.6 320 239.6 316.5 L259.6 316.5 Q285.6 320 307.6 350 L311.6 372 L187.6 372 Z" fill="#2f7de1"/><path d="M227.6 312 Q223.6 266 248.6 265 Q273.6 265 269.6 312 Z" fill="#0c0c0f"/><path d="M240.6 298 L258.6 298 L258.6 318 Q249.6 321 240.6 318 Z" fill="#f5c9b7"/><path d="M238.6 318 Q249.6 315 261.6 318.5" stroke="#1d1d2b" stroke-width="1" fill="none"/><path d="M235.6 280 Q234.6 302 245.6 307 Q249.6 309 253.6 307 Q264.6 302 263.6 280 Q249.6 266 235.6 280 Z" fill="#f5c9b7"/><ellipse cx="235.1" cy="290" rx="3" ry="4" fill="#f5c9b7"/><ellipse cx="264.1" cy="290" rx="3" ry="4" fill="#f5c9b7"/><path d="M228.6 290 Q225.6 264 249.6 265 Q271.6 265 268.6 290 Q259.6 278 246.6 277 Q235.6 280 228.6 290Z" fill="#0c0c0f"/><ellipse cx="243.6" cy="291" rx="1.3" ry="2" fill="#111"/><ellipse cx="255.6" cy="291" rx="1.3" ry="2" fill="#111"/><path d="M248.6 289 L247.1 297 L250.1 297" stroke="#111" stroke-width="0.8" fill="none"/><path d="M245.6 301 Q249.6 303 253.6 300" stroke="#111" stroke-width="0.8" fill="none"/></g><path d="M197.8 306 A51.8 51.8 0 0 1 301.4 306" stroke="#2b2142" stroke-width="1" fill="none"/><circle cx="379.3" cy="307.2" r="51.8" fill="#ffffff"/><g clip-path="url(#c1)"><path d="M321.3 350 Q343.3 320 369.3 316.5 L389.3 316.5 Q415.3 320 437.3 350 L441.3 372 L317.3 372 Z" fill="#f8cf3e"/><path d="M370.3 298 L388.3 298 L388.3 318 Q379.3 321 370.3 318 Z" fill="#f5c9b7"/><path d="M368.3 318 Q379.3 315 391.3 318.5" stroke="#1d1d2b" stroke-width="1" fill="none"/><path d="M365.3 280 Q364.3 302 375.3 307 Q379.3 309 383.3 307 Q394.3 302 393.3 280 Q379.3 266 365.3 280 Z" fill="#f5c9b7"/><ellipse cx="364.8" cy="290" rx="3" ry="4" fill="#f5c9b7"/><ellipse cx="393.8" cy="290" rx="3" ry="4" fill="#f5c9b7"/><path d="M363.3 285 Q360.3 263 379.3 263.5 Q398.3 263 395.3 285 L391.3 281 L387.3 283 L382.3 279 L376.3 282 L371.3 279 L367.3 283 Z" fill="#0c0c0f"/><ellipse cx="373.3" cy="291" rx="1.3" ry="2" fill="#111"/><ellipse cx="385.3" cy="291" rx="1.3" ry="2" fill="#111"/><path d="M378.3 289 L376.8 297 L379.8 297" stroke="#111" stroke-width="0.8" fill="none"/><path d="M375.3 301 Q379.3 303 383.3 300" stroke="#111" stroke-width="0.8" fill="none"/></g><path d="M327.5 306 A51.8 51.8 0 0 1 431.1 306" stroke="#2b2142" stroke-width="1" fill="none"/><circle cx="509.3" cy="307.2" r="51.8" fill="#ffffff"/><g clip-path="url(#c2)"><path d="M451.3 350 Q473.3 320 499.3 316.5 L519.3 316.5 Q545.3 320 567.3 350 L571.3 372 L447.3 372 Z" fill="#b2e3f7"/><path d="M488.3 322 Q487.3 263 510.3 263 Q531.3 263 530.3 321 L521.3 318 L495.3 318 Z" fill="#0c0c0f"/><path d="M500.3 298 L518.3 298 L518.3 318 Q509.3 321 500.3 318 Z" fill="#f5c9b7"/><path d="M498.3 318 Q509.3 315 521.3 318.5" stroke="#1d1d2b" stroke-width="1" fill="none"/><path d="M495.3 280 Q494.3 302 505.3 307 Q509.3 309 513.3 307 Q524.3 302 523.3 280 Q509.3 266 495.3 280 Z" fill="#f5c9b7"/><ellipse cx="494.8" cy="290" rx="3" ry="4" fill="#f5c9b7"/><ellipse cx="523.8" cy="290" rx="3" ry="4" fill="#f5c9b7"/><path d="M494.3 285 Q493.3 264 509.3 264 Q525.3 264 524.3 283 Q515.3 273 505.3 273 Q497.3 276 494.3 285Z" fill="#0c0c0f"/><ellipse cx="503.3" cy="291" rx="1.3" ry="2" fill="#111"/><ellipse cx="515.3" cy="291" rx="1.3" ry="2" fill="#111"/><path d="M508.3 289 L506.8 297 L509.8 297" stroke="#111" stroke-width="0.8" fill="none"/><path d="M505.3 301 Q509.3 303 513.3 300" stroke="#111" stroke-width="0.8" fill="none"/></g><path d="M457.5 306 A51.8 51.8 0 0 1 561.1 306" stroke="#2b2142" stroke-width="1" fill="none"/><circle cx="638.9" cy="307.2" r="51.8" fill="#ffffff"/><g clip-path="url(#c3)"><path d="M580.9 350 Q602.9 320 628.9 316.5 L648.9 316.5 Q674.9 320 696.9 350 L700.9 372 L576.9 372 Z" fill="#5a3dc6"/><path d="M629.9 298 L647.9 298 L647.9 318 Q638.9 321 629.9 318 Z" fill="#f5c9b7"/><path d="M627.9 318 Q638.9 315 650.9 318.5" stroke="#1d1d2b" stroke-width="1" fill="none"/><path d="M624.9 284 Q623.9 306 634.9 311 Q638.9 313 642.9 311 Q653.9 306 652.9 284 Q638.9 270 624.9 284 Z" fill="#f5c9b7"/><ellipse cx="624.4" cy="294" rx="3" ry="4" fill="#f5c9b7"/><ellipse cx="653.4" cy="294" rx="3" ry="4" fill="#f5c9b7"/><path d="M621.9 287 Q617.9 263 639.9 263 Q657.9 262 655.9 288 Q648.9 280 640.9 280 Q630.9 276 621.9 287Z" fill="#f3b23c"/><ellipse cx="632.9" cy="295" rx="1.3" ry="2" fill="#111"/><ellipse cx="644.9" cy="295" rx="1.3" ry="2" fill="#111"/><path d="M637.9 293 L636.4 301 L639.4 301" stroke="#111" stroke-width="0.8" fill="none"/><path d="M634.9 305 Q638.9 307 642.9 304" stroke="#111" stroke-width="0.8" fill="none"/></g><path d="M587.1 306 A51.8 51.8 0 0 1 690.6999999999999 306" stroke="#2b2142" stroke-width="1" fill="none"/><path d="M229 283 L266 270" stroke="#ffffff" stroke-width="1.3" fill="none" stroke-linecap="round"/><rect x="406.4" y="241.2" width="77" height="115.3" rx="2" fill="#2a7ae3"/><path d="M419.4 247.6 L470.4 247.6 A7 7 0 0 0 477.4 254.6 L477.4 344 A7 7 0 0 0 470.4 351 L419.4 351 A7 7 0 0 0 412.4 344 L412.4 254.6 A7 7 0 0 0 419.4 247.6 Z" fill="#1d5cc4" stroke="#d5eaff" stroke-width="1.1"/><path d="M420.6 249.8 L469.2 249.8 A6 6 0 0 0 475.2 255.8 L475.2 342.8 A6 6 0 0 0 469.2 348.8 L420.6 348.8 A6 6 0 0 0 414.6 342.8 L414.6 255.8 A6 6 0 0 0 420.6 249.8 Z" fill="url(#lat)" stroke="#9cc8ff" stroke-width="0.6"/><path d="M293 536 L293 498 M299 536 L299 498 M293 508 L283 495 M293 503 L287 496 M299 503 L310 487 M299 508 L313 490" stroke="#2b2142" stroke-width="1" fill="none"/><path d="M271 470 Q265 455 274 449 Q277 439 288 442 Q298 434 309 440 Q316 444 316 449 Q327 452 325 468 Q329 486 316 488 Q310 492 302 488 Q280 486 271 470 Z" fill="#e0c8f9" stroke="#2b2142" stroke-width="1"/><path d="M267 474 Q256 471 256 484 Q256 496 268 497 Q274 503 282 500 Q294 502 297 494 Q302 486 297 479 Q294 472 286 474 Q281 468 274 470 Q269 471 267 474 Z" fill="#e0c8f9" stroke="#2b2142" stroke-width="1"/><path d="M272 449 L267 443 M272 449 L274 441 M325 466 L334 464 M325 466 L332 470" stroke="#2b2142" stroke-width="1" fill="none"/><rect x="278" y="536" width="35" height="5" fill="#e0c8f9" stroke="#2b2142" stroke-width="1"/><path d="M580 536 L580 498 M586 536 L586 498 M580 508 L570 495 M580 503 L574 496 M586 503 L597 487 M586 508 L600 490" stroke="#2b2142" stroke-width="1" fill="none"/><path d="M558 470 Q552 455 561 449 Q564 439 575 442 Q585 434 596 440 Q603 444 603 449 Q614 452 612 468 Q616 486 603 488 Q597 492 589 488 Q567 486 558 470 Z" fill="#e0c8f9" stroke="#2b2142" stroke-width="1"/><path d="M554 474 Q543 471 543 484 Q543 496 555 497 Q561 503 569 500 Q581 502 584 494 Q589 486 584 479 Q581 472 573 474 Q568 468 561 470 Q556 471 554 474 Z" fill="#e0c8f9" stroke="#2b2142" stroke-width="1"/><path d="M559 449 L554 443 M559 449 L561 441 M612 466 L621 464 M612 466 L619 470" stroke="#2b2142" stroke-width="1" fill="none"/><rect x="565" y="536" width="35" height="5" fill="#e0c8f9" stroke="#2b2142" stroke-width="1"/><path d="M651.4 534.5 L632.6 512.9 M651.4 525 L639 508 M661.5 534.5 L690.5 502.7 M661.5 525 L684 503" stroke="#2b2142" stroke-width="1" fill="none"/><rect x="651.4" y="506" width="10.1" height="78.5" fill="#e0c8f9" stroke="#2b2142" stroke-width="1"/><path d="M608 466.6 C598 466 592 476 595 485.4 C590 495 592 502 598 505.6 C602 514 610 517 616.7 515.8 C624 518 632 517 637 512.9 L640 490 L620 470 Z" fill="#e0c8f9" stroke="#2b2142" stroke-width="1"/><path d="M603.7 442 C600 420 612 412 625.4 413 C640 404 650 410 660 408.8 C672 404 684 406 692 410 C708 414 716 422 715 430.5 C725 450 720 480 700 495 C692 500 686 502 680.3 502.7 C672 508 662 510 654.3 508.5 C648 508 644 507 639.9 505.6 C632 502 627 498 625.4 494 C622 488 621 482 619.6 476.7 C612 474 607 470 606.6 465 C604 458 603 450 603.7 442 Z" fill="#e0c8f9" stroke="#2b2142" stroke-width="1"/><path d="M661.5 460.8 C662 448 670 440 680.3 440.6 C688 436 698 438 703.5 442 C708 440 714 441 718 443.5 C728 448 734 455 732.4 462.3 C736 470 734 476 729.5 479.6 C736 486 735 493 731 497 C728 508 718 514 709 512.9 C702 514 696 512 692 508.5 C680 505 668 495 665.9 482.5 C660 476 659 468 661.5 460.8 Z" fill="#e0c8f9" stroke="#2b2142" stroke-width="1"/><path d="M697.7 411.7 L702 397.2 M697.7 411.7 L710.7 403 M606 463 L591 459 M598 461 L596 452" stroke="#2b2142" stroke-width="1" fill="none"/><rect x="626.8" y="584.3" width="60.8" height="8.1" fill="#e0c8f9" stroke="#2b2142" stroke-width="1"/><path d="M500 485 C560 492 625 482 660 460 C715 440 750 385 748 320 C748 270 738 235 722 206" stroke="#ffffff" stroke-width="1.3" fill="none" stroke-linecap="round" opacity="0.95"/><path d="M198 458 C258 472 300 462 337 449" stroke="#ffffff" stroke-width="1.3" fill="none" stroke-linecap="round" opacity="0.95"/><path d="M390.5 526 L428 526 L433 576 Q434 593 418 592.5 Q407 592 404.6 585.6 Q401 591 391 590.5 Q376 590 376.7 575 Z" fill="#333333"/><path d="M398 450 L378 461 Q345 472 337 484 Q332 497 342 503 L378 530 L387 522 L369 496 L381 481 L390.5 526 L428.5 526 L432 498 Q440 516 452 514 L480 484 L489 468 L483 463 L456 486 Q445 480 435 474 L426 456 Q422 451 418 450 Z" fill="#f9d03f"/><path d="M381 481 L388 521" stroke="#222" stroke-width="1.1"/><path d="M372 524 L381 532 M375 521 L384 529" stroke="#222" stroke-width="1"/><path d="M385 524 Q394 524 399.7 539 Q392 541 386 535 Z" fill="#f5c9b7"/><path d="M398 449 Q408 447 418 449 L418 454 L398 454 Z" fill="#f9d03f"/><path d="M399 452.5 Q408 451 417 452.5" stroke="#222" stroke-width="1.1" fill="none"/><path d="M401 436 L401 450 L414 450 L414 436 Z" fill="#f5c9b7"/><path d="M396.5 412 L420.5 412 L420 432 Q418 443 408 445 Q398 443 397 432 Z" fill="#f5c9b7"/><circle cx="397" cy="429" r="2.5" fill="#f5c9b7"/><circle cx="420" cy="429" r="2.5" fill="#f5c9b7"/><path d="M394 422 Q390 407 402 405 Q410 399 418 405 Q426 409 422 424 Q419 417 413 419 Q408 416 403 419 Q398 417 394 422 Z" fill="#0c0c0f"/><path d="M337 449 C380 432 430 404 466.3 375.3" stroke="#ffffff" stroke-width="1.3" fill="none" stroke-linecap="round"/><circle cx="402" cy="428.5" r="4.6" stroke="#1a1a1a" stroke-width="1.4" fill="none"/><circle cx="414.5" cy="428.5" r="4.6" stroke="#1a1a1a" stroke-width="1.4" fill="none"/><path d="M406.5 428 h3.5" stroke="#1a1a1a" stroke-width="1"/><path d="M405 438 Q409 440 412 437" stroke="#222" stroke-width="0.8" fill="none"/><path d="M486 466 Q476 470 474 495 Q466 528 450.5 554 L462 557 Q478 530 487 508 Z" fill="#ffffff"/><path d="M523 466 Q534 470 536 497 Q545 530 560.4 555 L547 558 Q534 533 523 504 Z" fill="#ffffff"/><path d="M443 559 Q449 550 459 553 Q461 564 452 568 Q445 567 443 559 Z" fill="#f5c9b7"/><path d="M550 556 Q559 550 566 558 Q569 568 562 569.7 Q553 566 550 556 Z" fill="#f5c9b7"/><path d="M487 518 L522.5 518 L533.5 580 Q535 597 519 597 Q507 597 504 589 Q501 597 490 597 Q473 597 474 580 Z" fill="#f05b30"/><path d="M485.8 466 Q486 461 492 461 L517 461 Q523.8 461 523.8 466 L523.5 516 L486 516 Z" fill="#f05b30"/><path d="M486 517 L523.5 517" stroke="#4a2420" stroke-width="1.8"/><path d="M486 464 Q481 432 496 423 Q510 417 519 428 Q525 446 521 464 Z" fill="#0c0c0f"/><path d="M498 452 L510 452 L510 464 L498 464 Z" fill="#f5c9b7"/><path d="M496 461 L504 464 L500 469 Z M512 461 L505 464 L509 469 Z" fill="#ffffff"/><path d="M493.7 438 Q493 455 502 459.7 Q504 460.5 507 459.7 Q514 455 513.3 438 Q503 426 493.7 438 Z" fill="#f5c9b7"/><path d="M491 442 Q490 424 503 423 Q516 423 516 440 Q510 431 503 431 Q495 432 491 442 Z" fill="#0c0c0f"/><ellipse cx="499" cy="443" rx="1.1" ry="1.7" fill="#111"/><ellipse cx="508" cy="443" rx="1.1" ry="1.7" fill="#111"/><path d="M500 452 Q504 454 508 451" stroke="#222" stroke-width="0.8" fill="none"/><path d="M505 476 Q509 472 513 476 Q515 481 509 484 Q503 481 505 476 Z" fill="#f7d04a" stroke="#222" stroke-width="0.7"/><path d="M482 463 L491 471 M480 466 L489 474" stroke="#222" stroke-width="1"/><path d="M433 450 C424 470 450 484 500 485 C540 488 570 486 600 480" stroke="#ffffff" stroke-width="1.3" fill="none" stroke-linecap="round"/><path d="M253 540.6 L735.5 540.6 M561 553.6 L735.5 553.6" stroke="#2b2142" stroke-width="1.1" fill="none"/><path d="M180 592 Q200 545 253 540.6" stroke="#2b2142" stroke-width="1.1" fill="none"/><path d="M532 571 Q545 556 561 553.6" stroke="#2b2142" stroke-width="1.1" fill="none"/><path d="M614 552 L612 545 M617 552 L618 543 M620 552 L623 547" stroke="#2b2142" stroke-width="0.9"/><rect x="118.2" y="206.2" width="651.6" height="365.4" fill="none" stroke="#2b2142" stroke-width="1.1"/></svg>
<div class="a" style="left:804px;top:62px;width:216px;height:664px;background:#474747"></div>
<div class="a" style="left:805px;top:67px;width:215px;height:654px;background:#2e2e2e"></div>
<div class="a" style="left:806px;top:70px;width:213px;height:650px;background:#535353"></div>
<div class="a" style="left:806px;top:70px;width:213px;height:24px;background:#474747;border-bottom:1px solid #3d3d3d"></div>
<div class="a" style="left:806px;top:70px;width:39px;height:24px;background:#535353"></div>
<div class="t b" style="left:814px;top:77.5px;font-size:9.3px;color:#f0f0f0">Слои</div>
<div class="t b" style="left:853px;top:77.5px;font-size:9.4px;color:#b4b4b4;width:50px;overflow:hidden">Монтажные</div>
<div class="t b" style="left:910.5px;top:77.5px;font-size:9.4px;color:#b4b4b4;width:52px;overflow:hidden">Экспорт ресурсов</div>
<svg style="left:0;top:0" width="1280" height="726"><rect x="903" y="72" width="1" height="21" fill="#3c3c3c"/><rect x="962" y="72" width="1" height="21" fill="#3c3c3c"/><rect x="845" y="70" width="1" height="24" fill="#3c3c3c"/><path d="M983.5 79 L986.5 82 L983.5 85 M987.5 79 L990.5 82 L987.5 85" stroke="#c8c8c8" stroke-width="1.1" fill="none"/><rect x="997.5" y="76" width="1" height="12" fill="#a8a8a8"/><rect x="1005" y="78" width="9" height="1.3" fill="#c8c8c8"/><rect x="1005" y="81.5" width="9" height="1.3" fill="#c8c8c8"/><rect x="1005" y="85" width="9" height="1.3" fill="#c8c8c8"/><rect x="811" y="100.30" width="193" height="18.66" fill="#4b6a8a"/><path d="M1000 100.30 L1004 100.30 L1004 104.30 Z" fill="#e8e8e8"/><path d="M814.5 109.63 Q820 104.63 825.5 109.63 Q820 114.63 814.5 109.63 Z" fill="#cfcfcf"/><circle cx="820" cy="109.63" r="1.9" fill="#4b6a8a"/><circle cx="820" cy="109.63" r="0.9" fill="#cfcfcf"/><rect x="830" y="100.30" width="0.8" height="18.66" fill="#4c4c4c"/><rect x="849.5" y="100.30" width="3.5" height="18.86" fill="#9c2340"/><path d="M860 106.63 L863 109.63 L860 112.63" stroke="#d0d0d0" stroke-width="1.2" fill="none"/><rect x="875.5" y="101.60" width="16" height="16" fill="#fff" stroke="#141414" stroke-width="1.4"/><rect x="882.0" y="107.10" width="3" height="5" fill="#111"/><rect x="972.5" y="100.30" width="0.8" height="18.66" fill="#4c4c4c"/><circle cx="981" cy="109.63" r="3.5" stroke="#d2d2d2" stroke-width="1" fill="none"/><rect x="811" y="118.46" width="190" height="0.8" fill="#4a4a4a"/><path d="M814.5 128.29 Q820 123.29 825.5 128.29 Q820 133.29 814.5 128.29 Z" fill="#cfcfcf"/><circle cx="820" cy="128.29" r="1.9" fill="#535353"/><circle cx="820" cy="128.29" r="0.9" fill="#cfcfcf"/><rect x="830" y="118.96" width="0.8" height="18.66" fill="#4c4c4c"/><rect x="849.5" y="118.96" width="3.5" height="18.86" fill="#a52a2a"/><path d="M860 125.29 L863 128.29 L860 131.29" stroke="#d0d0d0" stroke-width="1.2" fill="none"/><rect x="875.5" y="120.26" width="16" height="16" fill="#fff" stroke="#141414" stroke-width="1.4"/><rect x="972.5" y="118.96" width="0.8" height="18.66" fill="#4c4c4c"/><circle cx="981" cy="128.29" r="3.5" stroke="#d2d2d2" stroke-width="1" fill="none"/><rect x="811" y="137.12" width="190" height="0.8" fill="#4a4a4a"/><path d="M814.5 146.95 Q820 141.95 825.5 146.95 Q820 151.95 814.5 146.95 Z" fill="#cfcfcf"/><circle cx="820" cy="146.95" r="1.9" fill="#535353"/><circle cx="820" cy="146.95" r="0.9" fill="#cfcfcf"/><rect x="830" y="137.62" width="0.8" height="18.66" fill="#4c4c4c"/><rect x="849.5" y="137.62" width="3.5" height="18.86" fill="#6e7d2e"/><path d="M860 143.95 L863 146.95 L860 149.95" stroke="#d0d0d0" stroke-width="1.2" fill="none"/><rect x="875.5" y="138.92" width="16" height="16" fill="#fff" stroke="#141414" stroke-width="1.4"/><rect x="972.5" y="137.62" width="0.8" height="18.66" fill="#4c4c4c"/><circle cx="981" cy="146.95" r="3.5" stroke="#d2d2d2" stroke-width="1" fill="none"/><rect x="811" y="155.78" width="190" height="0.8" fill="#4a4a4a"/><path d="M814.5 165.61 Q820 160.61 825.5 165.61 Q820 170.61 814.5 165.61 Z" fill="#cfcfcf"/><circle cx="820" cy="165.61" r="1.9" fill="#535353"/><circle cx="820" cy="165.61" r="0.9" fill="#cfcfcf"/><rect x="830" y="156.28" width="0.8" height="18.66" fill="#4c4c4c"/><rect x="849.5" y="156.28" width="3.5" height="18.86" fill="#f2a3b6"/><path d="M860 162.61 L863 165.61 L860 168.61" stroke="#d0d0d0" stroke-width="1.2" fill="none"/><rect x="875.5" y="157.58" width="16" height="16" fill="#fff" stroke="#141414" stroke-width="1.4"/><rect x="972.5" y="156.28" width="0.8" height="18.66" fill="#4c4c4c"/><circle cx="981" cy="165.61" r="3.5" stroke="#d2d2d2" stroke-width="1" fill="none"/><rect x="811" y="174.44" width="190" height="0.8" fill="#4a4a4a"/><path d="M814.5 184.27 Q820 179.27 825.5 184.27 Q820 189.27 814.5 184.27 Z" fill="#cfcfcf"/><circle cx="820" cy="184.27" r="1.9" fill="#535353"/><circle cx="820" cy="184.27" r="0.9" fill="#cfcfcf"/><rect x="830" y="174.94" width="0.8" height="18.66" fill="#4c4c4c"/><rect x="849.5" y="174.94" width="3.5" height="18.86" fill="#9b2445"/><path d="M860 181.27 L863 184.27 L860 187.27" stroke="#d0d0d0" stroke-width="1.2" fill="none"/><rect x="875.5" y="176.24" width="16" height="16" fill="#fff" stroke="#141414" stroke-width="1.4"/><rect x="972.5" y="174.94" width="0.8" height="18.66" fill="#4c4c4c"/><circle cx="981" cy="184.27" r="3.5" stroke="#d2d2d2" stroke-width="1" fill="none"/><rect x="811" y="193.10" width="190" height="0.8" fill="#4a4a4a"/><path d="M814.5 202.93 Q820 197.93 825.5 202.93 Q820 207.93 814.5 202.93 Z" fill="#cfcfcf"/><circle cx="820" cy="202.93" r="1.9" fill="#535353"/><circle cx="820" cy="202.93" r="0.9" fill="#cfcfcf"/><rect x="830" y="193.60" width="0.8" height="18.66" fill="#4c4c4c"/><rect x="849.5" y="193.60" width="3.5" height="18.86" fill="#e89ac4"/><path d="M860 199.93 L863 202.93 L860 205.93" stroke="#d0d0d0" stroke-width="1.2" fill="none"/><rect x="875.5" y="194.90" width="16" height="16" fill="#fff" stroke="#141414" stroke-width="1.4"/><rect x="972.5" y="193.60" width="0.8" height="18.66" fill="#4c4c4c"/><circle cx="981" cy="202.93" r="3.5" stroke="#d2d2d2" stroke-width="1" fill="none"/><rect x="811" y="211.76" width="190" height="0.8" fill="#4a4a4a"/><path d="M814.5 221.59 Q820 216.59 825.5 221.59 Q820 226.59 814.5 221.59 Z" fill="#cfcfcf"/><circle cx="820" cy="221.59" r="1.9" fill="#535353"/><circle cx="820" cy="221.59" r="0.9" fill="#cfcfcf"/><rect x="830" y="212.26" width="0.8" height="18.66" fill="#4c4c4c"/><rect x="849.5" y="212.26" width="3.5" height="18.86" fill="#9b8fe8"/><path d="M860 218.59 L863 221.59 L860 224.59" stroke="#d0d0d0" stroke-width="1.2" fill="none"/><rect x="875.5" y="213.56" width="16" height="16" fill="#fff" stroke="#141414" stroke-width="1.4"/><rect x="972.5" y="212.26" width="0.8" height="18.66" fill="#4c4c4c"/><circle cx="981" cy="221.59" r="3.5" stroke="#d2d2d2" stroke-width="1" fill="none"/><rect x="811" y="230.42" width="190" height="0.8" fill="#4a4a4a"/><path d="M814.5 240.25 Q820 235.25 825.5 240.25 Q820 245.25 814.5 240.25 Z" fill="#cfcfcf"/><circle cx="820" cy="240.25" r="1.9" fill="#535353"/><circle cx="820" cy="240.25" r="0.9" fill="#cfcfcf"/><rect x="830" y="230.92" width="0.8" height="18.66" fill="#4c4c4c"/><rect x="849.5" y="230.92" width="3.5" height="18.86" fill="#a52a2a"/><path d="M860 237.25 L863 240.25 L860 243.25" stroke="#d0d0d0" stroke-width="1.2" fill="none"/><rect x="875.5" y="232.22" width="16" height="16" fill="#fff" stroke="#141414" stroke-width="1.4"/><rect x="972.5" y="230.92" width="0.8" height="18.66" fill="#4c4c4c"/><circle cx="981" cy="240.25" r="3.5" stroke="#d2d2d2" stroke-width="1" fill="none"/><rect x="811" y="249.08" width="190" height="0.8" fill="#4a4a4a"/><path d="M814.5 258.91 Q820 253.91 825.5 258.91 Q820 263.91 814.5 258.91 Z" fill="#cfcfcf"/><circle cx="820" cy="258.91" r="1.9" fill="#535353"/><circle cx="820" cy="258.91" r="0.9" fill="#cfcfcf"/><rect x="830" y="249.58" width="0.8" height="18.66" fill="#4c4c4c"/><rect x="849.5" y="249.58" width="3.5" height="18.86" fill="#6e7d2e"/><path d="M860 255.91 L863 258.91 L860 261.91" stroke="#d0d0d0" stroke-width="1.2" fill="none"/><rect x="875.5" y="250.88" width="16" height="16" fill="#fff" stroke="#141414" stroke-width="1.4"/><rect x="972.5" y="249.58" width="0.8" height="18.66" fill="#4c4c4c"/><circle cx="981" cy="258.91" r="3.5" stroke="#d2d2d2" stroke-width="1" fill="none"/><rect x="811" y="267.74" width="190" height="0.8" fill="#4a4a4a"/><path d="M814.5 277.57 Q820 272.57 825.5 277.57 Q820 282.57 814.5 277.57 Z" fill="#cfcfcf"/><circle cx="820" cy="277.57" r="1.9" fill="#535353"/><circle cx="820" cy="277.57" r="0.9" fill="#cfcfcf"/><rect x="830" y="268.24" width="0.8" height="18.66" fill="#4c4c4c"/><rect x="849.5" y="268.24" width="3.5" height="18.86" fill="#f09ab0"/><path d="M860 274.57 L863 277.57 L860 280.57" stroke="#d0d0d0" stroke-width="1.2" fill="none"/><rect x="875.5" y="269.54" width="16" height="16" fill="#fff" stroke="#141414" stroke-width="1.4"/><path d="M878.5 285.04 L879.5 273.54 Q883.5 270.54 887.5 273.54 L888.5 285.04Z" fill="#ee5a30"/><rect x="972.5" y="268.24" width="0.8" height="18.66" fill="#4c4c4c"/><circle cx="981" cy="277.57" r="3.5" stroke="#d2d2d2" stroke-width="1" fill="none"/><rect x="811" y="286.40" width="190" height="0.8" fill="#4a4a4a"/><path d="M814.5 296.23 Q820 291.23 825.5 296.23 Q820 301.23 814.5 296.23 Z" fill="#cfcfcf"/><circle cx="820" cy="296.23" r="1.9" fill="#535353"/><circle cx="820" cy="296.23" r="0.9" fill="#cfcfcf"/><rect x="830" y="286.90" width="0.8" height="18.66" fill="#4c4c4c"/><rect x="849.5" y="286.90" width="3.5" height="18.86" fill="#a8c83c"/><path d="M860 293.23 L863 296.23 L860 299.23" stroke="#d0d0d0" stroke-width="1.2" fill="none"/><rect x="875.5" y="288.20" width="16" height="16" fill="#fff" stroke="#141414" stroke-width="1.4"/><path d="M876.5 299.20 Q884.5 299.20 890.5 292.20" stroke="#111" stroke-width="1.3" fill="none"/><rect x="972.5" y="286.90" width="0.8" height="18.66" fill="#4c4c4c"/><circle cx="981" cy="296.23" r="3.5" stroke="#d2d2d2" stroke-width="1" fill="none"/><rect x="811" y="305.06" width="190" height="0.8" fill="#4a4a4a"/><path d="M814.5 314.89 Q820 309.89 825.5 314.89 Q820 319.89 814.5 314.89 Z" fill="#cfcfcf"/><circle cx="820" cy="314.89" r="1.9" fill="#535353"/><circle cx="820" cy="314.89" r="0.9" fill="#cfcfcf"/><rect x="830" y="305.56" width="0.8" height="18.66" fill="#4c4c4c"/><rect x="849.5" y="305.56" width="3.5" height="18.86" fill="#a87a30"/><path d="M860 311.89 L863 314.89 L860 317.89" stroke="#d0d0d0" stroke-width="1.2" fill="none"/><rect x="875.5" y="306.86" width="16" height="16" fill="#fff" stroke="#141414" stroke-width="1.4"/><path d="M882.5 307.86 L882.0 321.86 M884.5 307.86 L884.5 321.86" stroke="#777" stroke-width="0.8"/><rect x="972.5" y="305.56" width="0.8" height="18.66" fill="#4c4c4c"/><circle cx="981" cy="314.89" r="3.5" stroke="#d2d2d2" stroke-width="1" fill="none"/><rect x="811" y="323.72" width="190" height="0.8" fill="#4a4a4a"/><path d="M814.5 333.55 Q820 328.55 825.5 333.55 Q820 338.55 814.5 333.55 Z" fill="#cfcfcf"/><circle cx="820" cy="333.55" r="1.9" fill="#535353"/><circle cx="820" cy="333.55" r="0.9" fill="#cfcfcf"/><rect x="830" y="324.22" width="0.8" height="18.66" fill="#4c4c4c"/><rect x="849.5" y="324.22" width="3.5" height="18.86" fill="#c8c8c8"/><path d="M860 330.55 L863 333.55 L860 336.55" stroke="#d0d0d0" stroke-width="1.2" fill="none"/><rect x="875.5" y="325.52" width="16" height="16" fill="#fff" stroke="#141414" stroke-width="1.4"/><path d="M876.5 333.52 Q883.5 328.52 890.5 331.52" stroke="#111" stroke-width="1.6" fill="none"/><rect x="972.5" y="324.22" width="0.8" height="18.66" fill="#4c4c4c"/><circle cx="981" cy="333.55" r="3.5" stroke="#d2d2d2" stroke-width="1" fill="none"/><rect x="811" y="342.38" width="190" height="0.8" fill="#4a4a4a"/><path d="M814.5 352.21 Q820 347.21 825.5 352.21 Q820 357.21 814.5 352.21 Z" fill="#cfcfcf"/><circle cx="820" cy="352.21" r="1.9" fill="#535353"/><circle cx="820" cy="352.21" r="0.9" fill="#cfcfcf"/><rect x="830" y="342.88" width="0.8" height="18.66" fill="#4c4c4c"/><rect x="849.5" y="342.88" width="3.5" height="18.86" fill="#4a64e6"/><path d="M860 349.21 L863 352.21 L860 355.21" stroke="#d0d0d0" stroke-width="1.2" fill="none"/><rect x="875.5" y="344.18" width="16" height="16" fill="#fff" stroke="#141414" stroke-width="1.4"/><path d="M876.5 352.18 Q883.5 347.18 890.5 350.18" stroke="#111" stroke-width="1.6" fill="none"/><rect x="972.5" y="342.88" width="0.8" height="18.66" fill="#4c4c4c"/><circle cx="981" cy="352.21" r="3.5" stroke="#d2d2d2" stroke-width="1" fill="none"/><rect x="811" y="361.04" width="190" height="0.8" fill="#4a4a4a"/><path d="M814.5 370.87 Q820 365.87 825.5 370.87 Q820 375.87 814.5 370.87 Z" fill="#cfcfcf"/><circle cx="820" cy="370.87" r="1.9" fill="#535353"/><circle cx="820" cy="370.87" r="0.9" fill="#cfcfcf"/><rect x="830" y="361.54" width="0.8" height="18.66" fill="#4c4c4c"/><rect x="849.5" y="361.54" width="3.5" height="18.86" fill="#e04848"/><path d="M860 367.87 L863 370.87 L860 373.87" stroke="#d0d0d0" stroke-width="1.2" fill="none"/><rect x="875.5" y="362.84" width="16" height="16" fill="#fff" stroke="#141414" stroke-width="1.4"/><path d="M882.5 363.84 Q886.5 370.84 883.5 377.84 L881.5 377.84 Q884.5 370.84 880.5 363.84Z" fill="#111"/><rect x="972.5" y="361.54" width="0.8" height="18.66" fill="#4c4c4c"/><circle cx="981" cy="370.87" r="3.5" stroke="#d2d2d2" stroke-width="1" fill="none"/><rect x="811" y="379.70" width="190" height="0.8" fill="#4a4a4a"/><path d="M814.5 389.53 Q820 384.53 825.5 389.53 Q820 394.53 814.5 389.53 Z" fill="#cfcfcf"/><circle cx="820" cy="389.53" r="1.9" fill="#535353"/><circle cx="820" cy="389.53" r="0.9" fill="#cfcfcf"/><rect x="830" y="380.20" width="0.8" height="18.66" fill="#4c4c4c"/><rect x="849.5" y="380.20" width="3.5" height="18.86" fill="#48d048"/><path d="M860 386.53 L863 389.53 L860 392.53" stroke="#d0d0d0" stroke-width="1.2" fill="none"/><rect x="875.5" y="381.50" width="16" height="16" fill="#fff" stroke="#141414" stroke-width="1.4"/><path d="M882.5 382.50 Q886.5 389.50 883.5 396.50 L881.5 396.50 Q884.5 389.50 880.5 382.50Z" fill="#111"/><rect x="972.5" y="380.20" width="0.8" height="18.66" fill="#4c4c4c"/><circle cx="981" cy="389.53" r="3.5" stroke="#d2d2d2" stroke-width="1" fill="none"/><rect x="811" y="398.36" width="190" height="0.8" fill="#4a4a4a"/><path d="M814.5 408.19 Q820 403.19 825.5 408.19 Q820 413.19 814.5 408.19 Z" fill="#cfcfcf"/><circle cx="820" cy="408.19" r="1.9" fill="#535353"/><circle cx="820" cy="408.19" r="0.9" fill="#cfcfcf"/><rect x="830" y="398.86" width="0.8" height="18.66" fill="#4c4c4c"/><rect x="849.5" y="398.86" width="3.5" height="18.86" fill="#8e2c44"/><path d="M860 405.19 L863 408.19 L860 411.19" stroke="#d0d0d0" stroke-width="1.2" fill="none"/><rect x="875.5" y="400.16" width="16" height="16" fill="#fff" stroke="#141414" stroke-width="1.4"/><rect x="878.5" y="401.16" width="10" height="14" rx="4" fill="#111"/><rect x="880.5" y="404.16" width="6" height="10" rx="2" fill="#f2b8a4"/><rect x="972.5" y="398.86" width="0.8" height="18.66" fill="#4c4c4c"/><circle cx="981" cy="408.19" r="3.5" stroke="#d2d2d2" stroke-width="1" fill="none"/><rect x="811" y="417.02" width="190" height="0.8" fill="#4a4a4a"/><path d="M814.5 426.85 Q820 421.85 825.5 426.85 Q820 431.85 814.5 426.85 Z" fill="#cfcfcf"/><circle cx="820" cy="426.85" r="1.9" fill="#535353"/><circle cx="820" cy="426.85" r="0.9" fill="#cfcfcf"/><rect x="830" y="417.52" width="0.8" height="18.66" fill="#4c4c4c"/><rect x="849.5" y="417.52" width="3.5" height="18.86" fill="#48e0e8"/><path d="M860 423.85 L863 426.85 L860 429.85" stroke="#d0d0d0" stroke-width="1.2" fill="none"/><rect x="875.5" y="418.82" width="16" height="16" fill="#fff" stroke="#141414" stroke-width="1.4"/><rect x="879.0" y="419.82" width="9" height="14" fill="#f2a898"/><rect x="972.5" y="417.52" width="0.8" height="18.66" fill="#4c4c4c"/><circle cx="981" cy="426.85" r="3.5" stroke="#d2d2d2" stroke-width="1" fill="none"/><rect x="811" y="435.68" width="190" height="0.8" fill="#4a4a4a"/><path d="M814.5 445.51 Q820 440.51 825.5 445.51 Q820 450.51 814.5 445.51 Z" fill="#cfcfcf"/><circle cx="820" cy="445.51" r="1.9" fill="#535353"/><circle cx="820" cy="445.51" r="0.9" fill="#cfcfcf"/><rect x="830" y="436.18" width="0.8" height="18.66" fill="#4c4c4c"/><rect x="849.5" y="436.18" width="3.5" height="18.86" fill="#e8e048"/><path d="M860 442.51 L863 445.51 L860 448.51" stroke="#d0d0d0" stroke-width="1.2" fill="none"/><rect x="875.5" y="437.48" width="16" height="16" fill="#fff" stroke="#141414" stroke-width="1.4"/><path d="M880.5 439.48 L886.5 438.48 L885.5 452.48 L881.5 452.48Z" fill="#ee5a30"/><rect x="972.5" y="436.18" width="0.8" height="18.66" fill="#4c4c4c"/><circle cx="981" cy="445.51" r="3.5" stroke="#d2d2d2" stroke-width="1" fill="none"/><rect x="811" y="454.34" width="190" height="0.8" fill="#4a4a4a"/><path d="M814.5 464.17 Q820 459.17 825.5 464.17 Q820 469.17 814.5 464.17 Z" fill="#cfcfcf"/><circle cx="820" cy="464.17" r="1.9" fill="#535353"/><circle cx="820" cy="464.17" r="0.9" fill="#cfcfcf"/><rect x="830" y="454.84" width="0.8" height="18.66" fill="#4c4c4c"/><rect x="849.5" y="454.84" width="3.5" height="18.86" fill="#8c8c8c"/><path d="M860 461.17 L863 464.17 L860 467.17" stroke="#d0d0d0" stroke-width="1.2" fill="none"/><rect x="875.5" y="456.14" width="16" height="16" fill="#fff" stroke="#141414" stroke-width="1.4"/><path d="M880.5 458.14 L886.5 457.14 L885.5 471.14 L881.5 471.14Z" fill="#ee5a30"/><rect x="972.5" y="454.84" width="0.8" height="18.66" fill="#4c4c4c"/><circle cx="981" cy="464.17" r="3.5" stroke="#d2d2d2" stroke-width="1" fill="none"/><rect x="811" y="473.00" width="190" height="0.8" fill="#4a4a4a"/><path d="M814.5 482.83 Q820 477.83 825.5 482.83 Q820 487.83 814.5 482.83 Z" fill="#cfcfcf"/><circle cx="820" cy="482.83" r="1.9" fill="#535353"/><circle cx="820" cy="482.83" r="0.9" fill="#cfcfcf"/><rect x="830" y="473.50" width="0.8" height="18.66" fill="#4c4c4c"/><rect x="849.5" y="473.50" width="3.5" height="18.86" fill="#101010"/><path d="M860 479.83 L863 482.83 L860 485.83" stroke="#d0d0d0" stroke-width="1.2" fill="none"/><rect x="875.5" y="474.80" width="16" height="16" fill="#fff" stroke="#141414" stroke-width="1.4"/><circle cx="883.5" cy="482.80" r="7" fill="#ee5a30"/><rect x="972.5" y="473.50" width="0.8" height="18.66" fill="#4c4c4c"/><circle cx="981" cy="482.83" r="3.5" stroke="#d2d2d2" stroke-width="1" fill="none"/><rect x="811" y="491.66" width="190" height="0.8" fill="#4a4a4a"/><path d="M814.5 501.49 Q820 496.49 825.5 501.49 Q820 506.49 814.5 501.49 Z" fill="#cfcfcf"/><circle cx="820" cy="501.49" r="1.9" fill="#535353"/><circle cx="820" cy="501.49" r="0.9" fill="#cfcfcf"/><rect x="830" y="492.16" width="0.8" height="18.66" fill="#4c4c4c"/><rect x="849.5" y="492.16" width="3.5" height="18.86" fill="#e07830"/><path d="M860 498.49 L863 501.49 L860 504.49" stroke="#d0d0d0" stroke-width="1.2" fill="none"/><rect x="875.5" y="493.46" width="16" height="16" fill="#fff" stroke="#141414" stroke-width="1.4"/><rect x="876.5" y="494.46" width="14" height="14" fill="#050505"/><rect x="972.5" y="492.16" width="0.8" height="18.66" fill="#4c4c4c"/><circle cx="981" cy="501.49" r="3.5" stroke="#d2d2d2" stroke-width="1" fill="none"/><rect x="811" y="510.32" width="190" height="0.8" fill="#4a4a4a"/><path d="M814.5 520.15 Q820 515.15 825.5 520.15 Q820 525.15 814.5 520.15 Z" fill="#cfcfcf"/><circle cx="820" cy="520.15" r="1.9" fill="#535353"/><circle cx="820" cy="520.15" r="0.9" fill="#cfcfcf"/><rect x="830" y="510.82" width="0.8" height="18.66" fill="#4c4c4c"/><rect x="849.5" y="510.82" width="3.5" height="18.86" fill="#2e6422"/><path d="M860 517.15 L863 520.15 L860 523.15" stroke="#d0d0d0" stroke-width="1.2" fill="none"/><rect x="875.5" y="512.12" width="16" height="16" fill="#fff" stroke="#141414" stroke-width="1.4"/><rect x="972.5" y="510.82" width="0.8" height="18.66" fill="#4c4c4c"/><circle cx="981" cy="520.15" r="3.5" stroke="#d2d2d2" stroke-width="1" fill="none"/><rect x="811" y="528.98" width="190" height="0.8" fill="#4a4a4a"/><path d="M814.5 538.81 Q820 533.81 825.5 538.81 Q820 543.81 814.5 538.81 Z" fill="#cfcfcf"/><circle cx="820" cy="538.81" r="1.9" fill="#535353"/><circle cx="820" cy="538.81" r="0.9" fill="#cfcfcf"/><rect x="830" y="529.48" width="0.8" height="18.66" fill="#4c4c4c"/><rect x="849.5" y="529.48" width="3.5" height="18.86" fill="#2ea0a0"/><path d="M860 535.81 L863 538.81 L860 541.81" stroke="#d0d0d0" stroke-width="1.2" fill="none"/><rect x="875.5" y="530.78" width="16" height="16" fill="#fff" stroke="#141414" stroke-width="1.4"/><path d="M878.5 534.78 Q881.5 531.78 884.5 534.78 L889.5 543.78 Q885.5 546.78 882.5 542.78Z" fill="#f2a898"/><rect x="972.5" y="529.48" width="0.8" height="18.66" fill="#4c4c4c"/><circle cx="981" cy="538.81" r="3.5" stroke="#d2d2d2" stroke-width="1" fill="none"/><rect x="811" y="547.64" width="190" height="0.8" fill="#4a4a4a"/><path d="M814.5 557.47 Q820 552.47 825.5 557.47 Q820 562.47 814.5 557.47 Z" fill="#cfcfcf"/><circle cx="820" cy="557.47" r="1.9" fill="#535353"/><circle cx="820" cy="557.47" r="0.9" fill="#cfcfcf"/><rect x="830" y="548.14" width="0.8" height="18.66" fill="#4c4c4c"/><rect x="849.5" y="548.14" width="3.5" height="18.86" fill="#d4a474"/><path d="M860 554.47 L863 557.47 L860 560.47" stroke="#d0d0d0" stroke-width="1.2" fill="none"/><rect x="875.5" y="549.44" width="16" height="16" fill="#fff" stroke="#141414" stroke-width="1.4"/><rect x="972.5" y="548.14" width="0.8" height="18.66" fill="#4c4c4c"/><circle cx="981" cy="557.47" r="3.5" stroke="#d2d2d2" stroke-width="1" fill="none"/><rect x="811" y="566.30" width="190" height="0.8" fill="#4a4a4a"/><path d="M814.5 576.13 Q820 571.13 825.5 576.13 Q820 581.13 814.5 576.13 Z" fill="#cfcfcf"/><circle cx="820" cy="576.13" r="1.9" fill="#535353"/><circle cx="820" cy="576.13" r="0.9" fill="#cfcfcf"/><rect x="830" y="566.80" width="0.8" height="18.66" fill="#4c4c4c"/><rect x="849.5" y="566.80" width="3.5" height="18.86" fill="#b04424"/><path d="M860 573.13 L863 576.13 L860 579.13" stroke="#d0d0d0" stroke-width="1.2" fill="none"/><rect x="875.5" y="568.10" width="16" height="16" fill="#fff" stroke="#141414" stroke-width="1.4"/><rect x="972.5" y="566.80" width="0.8" height="18.66" fill="#4c4c4c"/><circle cx="981" cy="576.13" r="3.5" stroke="#d2d2d2" stroke-width="1" fill="none"/><rect x="811" y="584.96" width="190" height="0.8" fill="#4a4a4a"/><path d="M814.5 594.79 Q820 589.79 825.5 594.79 Q820 599.79 814.5 594.79 Z" fill="#cfcfcf"/><circle cx="820" cy="594.79" r="1.9" fill="#535353"/><circle cx="820" cy="594.79" r="0.9" fill="#cfcfcf"/><rect x="830" y="585.46" width="0.8" height="18.66" fill="#4c4c4c"/><rect x="849.5" y="585.46" width="3.5" height="18.86" fill="#9444e0"/><path d="M860 591.79 L863 594.79 L860 597.79" stroke="#d0d0d0" stroke-width="1.2" fill="none"/><rect x="875.5" y="586.76" width="16" height="16" fill="#fff" stroke="#141414" stroke-width="1.4"/><path d="M878.5 590.76 Q881.5 587.76 884.5 590.76 L889.5 599.76 Q885.5 602.76 882.5 598.76Z" fill="#f2a898"/><rect x="972.5" y="585.46" width="0.8" height="18.66" fill="#4c4c4c"/><circle cx="981" cy="594.79" r="3.5" stroke="#d2d2d2" stroke-width="1" fill="none"/><rect x="811" y="603.62" width="190" height="0.8" fill="#4a4a4a"/><path d="M814.5 613.45 Q820 608.45 825.5 613.45 Q820 618.45 814.5 613.45 Z" fill="#cfcfcf"/><circle cx="820" cy="613.45" r="1.9" fill="#535353"/><circle cx="820" cy="613.45" r="0.9" fill="#cfcfcf"/><rect x="830" y="604.12" width="0.8" height="18.66" fill="#4c4c4c"/><rect x="849.5" y="604.12" width="3.5" height="18.86" fill="#f0a444"/><path d="M860 610.45 L863 613.45 L860 616.45" stroke="#d0d0d0" stroke-width="1.2" fill="none"/><rect x="875.5" y="605.42" width="16" height="16" fill="#fff" stroke="#141414" stroke-width="1.4"/><rect x="972.5" y="604.12" width="0.8" height="18.66" fill="#4c4c4c"/><circle cx="981" cy="613.45" r="3.5" stroke="#d2d2d2" stroke-width="1" fill="none"/><rect x="811" y="622.28" width="190" height="0.8" fill="#4a4a4a"/><path d="M814.5 632.11 Q820 627.11 825.5 632.11 Q820 637.11 814.5 632.11 Z" fill="#cfcfcf"/><circle cx="820" cy="632.11" r="1.9" fill="#535353"/><circle cx="820" cy="632.11" r="0.9" fill="#cfcfcf"/><rect x="830" y="622.78" width="0.8" height="18.66" fill="#4c4c4c"/><rect x="849.5" y="622.78" width="3.5" height="18.86" fill="#a22444"/><path d="M860 629.11 L863 632.11 L860 635.11" stroke="#d0d0d0" stroke-width="1.2" fill="none"/><rect x="875.5" y="624.08" width="16" height="16" fill="#fff" stroke="#141414" stroke-width="1.4"/><path d="M876.5 628.08 L880.5 625.08 L890.5 635.08 L887.5 639.08Z" fill="#f7cc33"/><path d="M885.5 639.08 L890.5 634.08" stroke="#222" stroke-width="1"/><rect x="972.5" y="622.78" width="0.8" height="18.66" fill="#4c4c4c"/><circle cx="981" cy="632.11" r="3.5" stroke="#d2d2d2" stroke-width="1" fill="none"/><rect x="811" y="640.94" width="190" height="0.8" fill="#4a4a4a"/><path d="M814.5 650.77 Q820 645.77 825.5 650.77 Q820 655.77 814.5 650.77 Z" fill="#cfcfcf"/><circle cx="820" cy="650.77" r="1.9" fill="#535353"/><circle cx="820" cy="650.77" r="0.9" fill="#cfcfcf"/><rect x="830" y="641.44" width="0.8" height="18.66" fill="#4c4c4c"/><rect x="849.5" y="641.44" width="3.5" height="18.86" fill="#a4c444"/><path d="M860 647.77 L863 650.77 L860 653.77" stroke="#d0d0d0" stroke-width="1.2" fill="none"/><rect x="875.5" y="642.74" width="16" height="16" fill="#fff" stroke="#141414" stroke-width="1.4"/><path d="M878.5 646.74 Q881.5 643.74 884.5 646.74 L889.5 655.74 Q885.5 658.74 882.5 654.74Z" fill="#f2a898"/><rect x="972.5" y="641.44" width="0.8" height="18.66" fill="#4c4c4c"/><circle cx="981" cy="650.77" r="3.5" stroke="#d2d2d2" stroke-width="1" fill="none"/><rect x="811" y="659.60" width="190" height="0.8" fill="#4a4a4a"/><path d="M814.5 669.43 Q820 664.43 825.5 669.43 Q820 674.43 814.5 669.43 Z" fill="#cfcfcf"/><circle cx="820" cy="669.43" r="1.9" fill="#535353"/><circle cx="820" cy="669.43" r="0.9" fill="#cfcfcf"/><rect x="830" y="660.10" width="0.8" height="18.66" fill="#4c4c4c"/><rect x="849.5" y="660.10" width="3.5" height="18.86" fill="#8e5c2c"/><path d="M860 666.43 L863 669.43 L860 672.43" stroke="#d0d0d0" stroke-width="1.2" fill="none"/><rect x="875.5" y="661.40" width="16" height="16" fill="#fff" stroke="#141414" stroke-width="1.4"/><path d="M878.5 676.40 L877.5 667.40 Q883.5 662.40 889.5 664.40 L889.5 676.40Z" fill="#f7cc33"/><rect x="972.5" y="660.10" width="0.8" height="18.66" fill="#4c4c4c"/><circle cx="981" cy="669.43" r="3.5" stroke="#d2d2d2" stroke-width="1" fill="none"/><rect x="811" y="678.26" width="190" height="0.8" fill="#4a4a4a"/><path d="M814.5 688.09 Q820 683.09 825.5 688.09 Q820 693.09 814.5 688.09 Z" fill="#cfcfcf"/><circle cx="820" cy="688.09" r="1.9" fill="#535353"/><circle cx="820" cy="688.09" r="0.9" fill="#cfcfcf"/><rect x="830" y="678.76" width="0.8" height="18.66" fill="#4c4c4c"/><rect x="849.5" y="678.76" width="3.5" height="18.86" fill="#5474e4"/><path d="M860 685.09 L863 688.09 L860 691.09" stroke="#d0d0d0" stroke-width="1.2" fill="none"/><rect x="875.5" y="680.06" width="16" height="16" fill="#fff" stroke="#141414" stroke-width="1.4"/><rect x="876.5" y="683.06" width="14" height="9" rx="2" fill="#333"/><rect x="972.5" y="678.76" width="0.8" height="18.66" fill="#4c4c4c"/><circle cx="981" cy="688.09" r="3.5" stroke="#d2d2d2" stroke-width="1" fill="none"/><rect x="1004" y="99" width="10" height="597" fill="#505050"/><path d="M1006 109 L1009 105.5 L1012 109" stroke="#6c6c6c" stroke-width="1.2" fill="none"/><rect x="1005" y="103.5" width="9" height="191" rx="4.5" fill="#5b5b5b"/><path d="M1006 688 L1009 691.5 L1012 688" stroke="#6c6c6c" stroke-width="1.2" fill="none"/><rect x="806" y="696" width="213" height="18" fill="#535353"/><rect x="806" y="696" width="213" height="0.8" fill="#474747"/><path d="M869 701 h-1.5 v10 h10 v-1.5 M873 705 L879 699 M875 699 h4 v4" stroke="#cfcfcf" stroke-width="1.1" fill="none"/><circle cx="897" cy="704" r="3.5" stroke="#6a6a6a" stroke-width="1.2" fill="none"/><path d="M899.5 706.5 L902.5 709.5" stroke="#6a6a6a" stroke-width="1.5"/><rect x="915" y="699.5" width="8" height="8" fill="none" stroke="#cfcfcf" stroke-width="1"/><rect x="917.5" y="702" width="8" height="8" fill="#8a8a8a" stroke="#cfcfcf" stroke-width="1"/><path d="M937 700 v5 h4 M939.5 703 l1.8 2 -1.8 2" stroke="#cfcfcf" stroke-width="1" fill="none"/><rect x="942.5" y="700.5" width="8" height="9" fill="none" stroke="#cfcfcf" stroke-width="1"/><path d="M944 705 h5 M946.5 702.5 v5" stroke="#cfcfcf" stroke-width="1"/><rect x="963" y="700.5" width="9" height="10" fill="none" stroke="#cfcfcf" stroke-width="1"/><path d="M965 705.5 h5 M967.5 703 v5" stroke="#cfcfcf" stroke-width="1"/><path d="M985.5 701.5 h9 M988 701.5 v-1.5 h4 v1.5 M986.5 702.5 v8 h7 v-8 M988.5 704 v5 M990 704 v5 M991.5 704 v5" stroke="#cfcfcf" stroke-width="1" fill="none"/><rect x="806" y="714" width="213" height="6" fill="#4b4b4b"/><rect x="806" y="713.5" width="213" height="1" fill="#3a3a3a"/><rect x="907.0" y="715.5" width="0.9" height="3" fill="#2e2e2e"/><rect x="908.7" y="715.5" width="0.9" height="3" fill="#2e2e2e"/><rect x="910.4" y="715.5" width="0.9" height="3" fill="#2e2e2e"/><rect x="912.1" y="715.5" width="0.9" height="3" fill="#2e2e2e"/><rect x="913.8" y="715.5" width="0.9" height="3" fill="#2e2e2e"/><rect x="915.5" y="715.5" width="0.9" height="3" fill="#2e2e2e"/></svg>
<div class="t b" style="left:896.5px;top:105.63px;font-size:9.0px;color:#f2f2f2">карта</div>
<div class="t b" style="left:896.5px;top:124.29px;font-size:9.0px;color:#d6d6d6">линия 4</div>
<div class="t b" style="left:896.5px;top:142.95px;font-size:9.0px;color:#d6d6d6">линия 3</div>
<div class="t b" style="left:896.5px;top:161.61px;font-size:9.0px;color:#d6d6d6">линия 2</div>
<div class="t b" style="left:896.5px;top:180.27px;font-size:9.0px;color:#d6d6d6">линия 1</div>
<div class="t b" style="left:896.5px;top:198.93px;font-size:9.0px;color:#d6d6d6">полукру...</div>
<div class="t b" style="left:896.5px;top:217.59px;font-size:9.0px;color:#d6d6d6">полукру...</div>
<div class="t b" style="left:896.5px;top:236.25px;font-size:9.0px;color:#d6d6d6">полукру...</div>
<div class="t b" style="left:896.5px;top:254.91px;font-size:9.0px;color:#d6d6d6">полукру...</div>
<div class="t b" style="left:896.5px;top:273.57px;font-size:9.0px;color:#d6d6d6">д тело</div>
<div class="t b" style="left:896.5px;top:292.23px;font-size:9.0px;color:#d6d6d6">д рот</div>
<div class="t b" style="left:896.5px;top:310.89px;font-size:9.0px;color:#d6d6d6">д волос</div>
<div class="t b" style="left:896.5px;top:329.55px;font-size:9.0px;color:#d6d6d6">д бровь 1</div>
<div class="t b" style="left:896.5px;top:348.21px;font-size:9.0px;color:#d6d6d6">д бровь 2</div>
<div class="t b" style="left:896.5px;top:366.87px;font-size:9.0px;color:#d6d6d6">д глаз 1</div>
<div class="t b" style="left:896.5px;top:385.53px;font-size:9.0px;color:#d6d6d6">д глаз 2</div>
<div class="t b" style="left:896.5px;top:404.19px;font-size:9.0px;color:#d6d6d6">д голова</div>
<div class="t b" style="left:896.5px;top:422.85px;font-size:9.0px;color:#d6d6d6">д шея</div>
<div class="t b" style="left:896.5px;top:441.51px;font-size:9.0px;color:#d6d6d6">д бедро 1</div>
<div class="t b" style="left:896.5px;top:460.17px;font-size:9.0px;color:#d6d6d6">д бедро 2</div>
<div class="t b" style="left:896.5px;top:478.83px;font-size:9.0px;color:#d6d6d6">д таз</div>
<div class="t b" style="left:896.5px;top:497.49px;font-size:9.0px;color:#d6d6d6">д волосы</div>
<div class="t b" style="left:896.5px;top:516.15px;font-size:9.0px;color:#d6d6d6">д предп...</div>
<div class="t b" style="left:896.5px;top:534.81px;font-size:9.0px;color:#d6d6d6">д кисть 2</div>
<div class="t b" style="left:896.5px;top:553.47px;font-size:9.0px;color:#d6d6d6">д плечо 2</div>
<div class="t b" style="left:896.5px;top:572.13px;font-size:9.0px;color:#d6d6d6">д предп...</div>
<div class="t b" style="left:896.5px;top:590.79px;font-size:9.0px;color:#d6d6d6">д кисть 1</div>
<div class="t b" style="left:896.5px;top:609.45px;font-size:9.0px;color:#d6d6d6">д плечо 1</div>
<div class="t b" style="left:896.5px;top:628.11px;font-size:9.0px;color:#d6d6d6">п предп...</div>
<div class="t b" style="left:896.5px;top:646.77px;font-size:9.0px;color:#d6d6d6">п кисть 1</div>
<div class="t b" style="left:896.5px;top:665.43px;font-size:9.0px;color:#d6d6d6">п тело</div>
<div class="t b" style="left:896.5px;top:684.09px;font-size:9.0px;color:#d6d6d6">п таз</div>
<div class="t sw" style="left:811.5px;top:701px;font-size:9.4px;color:#d8d8d8">100...</div>
<div class="a" style="left:1020px;top:60px;width:260px;height:666px;background:#474747"></div>
<div class="a" style="left:1021px;top:71px;width:34px;height:655px;background:#535353;border-left:1px solid #3a3a3a;border-right:1px solid #3a3a3a"></div>
<div class="a" style="left:1056px;top:70px;width:224px;height:656px;background:#535353;border-left:1px solid #3a3a3a"></div>
<svg style="left:0;top:0" width="1280" height="726"><rect x="1020" y="60" width="260" height="10" fill="#474747"/><path d="M1045 63.5 L1043 65.5 L1045 67.5 M1048 63.5 L1046 65.5 L1048 67.5" stroke="#bdbdbd" stroke-width="1" fill="none"/><path d="M1267 63.5 L1269 65.5 L1267 67.5 M1270 63.5 L1272 65.5 L1270 67.5" stroke="#bdbdbd" stroke-width="1" fill="none"/><rect x="1021" y="132" width="34" height="1.2" fill="#3a3a3a"/><rect x="1021" y="218.5" width="34" height="1.2" fill="#3a3a3a"/><rect x="1021" y="305" width="34" height="1.2" fill="#3a3a3a"/><rect x="1021" y="364" width="34" height="1.2" fill="#3a3a3a"/><rect x="1021" y="452.5" width="34" height="1.2" fill="#3a3a3a"/><rect x="1030.5" y="75.0" width="1.1" height="3" fill="#333"/><rect x="1032.7" y="75.0" width="1.1" height="3" fill="#333"/><rect x="1034.9" y="75.0" width="1.1" height="3" fill="#333"/><rect x="1037.1" y="75.0" width="1.1" height="3" fill="#333"/><rect x="1039.3" y="75.0" width="1.1" height="3" fill="#333"/><rect x="1041.5" y="75.0" width="1.1" height="3" fill="#333"/><rect x="1043.7" y="75.0" width="1.1" height="3" fill="#333"/><rect x="1045.9" y="75.0" width="1.1" height="3" fill="#333"/><rect x="1030.5" y="136.5" width="1.1" height="3" fill="#333"/><rect x="1032.7" y="136.5" width="1.1" height="3" fill="#333"/><rect x="1034.9" y="136.5" width="1.1" height="3" fill="#333"/><rect x="1037.1" y="136.5" width="1.1" height="3" fill="#333"/><rect x="1039.3" y="136.5" width="1.1" height="3" fill="#333"/><rect x="1041.5" y="136.5" width="1.1" height="3" fill="#333"/><rect x="1043.7" y="136.5" width="1.1" height="3" fill="#333"/><rect x="1045.9" y="136.5" width="1.1" height="3" fill="#333"/><rect x="1030.5" y="221.0" width="1.1" height="3" fill="#333"/><rect x="1032.7" y="221.0" width="1.1" height="3" fill="#333"/><rect x="1034.9" y="221.0" width="1.1" height="3" fill="#333"/><rect x="1037.1" y="221.0" width="1.1" height="3" fill="#333"/><rect x="1039.3" y="221.0" width="1.1" height="3" fill="#333"/><rect x="1041.5" y="221.0" width="1.1" height="3" fill="#333"/><rect x="1043.7" y="221.0" width="1.1" height="3" fill="#333"/><rect x="1045.9" y="221.0" width="1.1" height="3" fill="#333"/><rect x="1030.5" y="307.5" width="1.1" height="3" fill="#333"/><rect x="1032.7" y="307.5" width="1.1" height="3" fill="#333"/><rect x="1034.9" y="307.5" width="1.1" height="3" fill="#333"/><rect x="1037.1" y="307.5" width="1.1" height="3" fill="#333"/><rect x="1039.3" y="307.5" width="1.1" height="3" fill="#333"/><rect x="1041.5" y="307.5" width="1.1" height="3" fill="#333"/><rect x="1043.7" y="307.5" width="1.1" height="3" fill="#333"/><rect x="1045.9" y="307.5" width="1.1" height="3" fill="#333"/><rect x="1030.5" y="367.1" width="1.1" height="3" fill="#333"/><rect x="1032.7" y="367.1" width="1.1" height="3" fill="#333"/><rect x="1034.9" y="367.1" width="1.1" height="3" fill="#333"/><rect x="1037.1" y="367.1" width="1.1" height="3" fill="#333"/><rect x="1039.3" y="367.1" width="1.1" height="3" fill="#333"/><rect x="1041.5" y="367.1" width="1.1" height="3" fill="#333"/><rect x="1043.7" y="367.1" width="1.1" height="3" fill="#333"/><rect x="1045.9" y="367.1" width="1.1" height="3" fill="#333"/><path d="M1031 92.7 q-1 -7 7 -7 q8 0 8 5 q0 3 -3 3 q-2 0 -2 2 q0 3 -4 3 q-6 0 -6 -6z" fill="#cfcfcf"/><circle cx="1034" cy="92.7" r="1.3" fill="#535353"/><circle cx="1037" cy="94.7" r="1.3" fill="#535353"/><circle cx="1041" cy="89.7" r="1.3" fill="#535353"/><circle cx="1038" cy="89.2" r="1.3" fill="#535353"/><defs><linearGradient id="qg" x1="0" y1="0" x2="1" y2="1"><stop offset="0" stop-color="#111"/><stop offset="1" stop-color="#f0f0f0"/></linearGradient></defs><path d="M1032 123.5 v-14 a13 13 0 0 1 13 13 z" fill="url(#qg)" stroke="#cfcfcf" stroke-width="0.8"/><rect x="1031" y="148.7" width="14" height="10" fill="#cfcfcf"/><rect x="1032" y="149.7" width="5" height="3.5" fill="#777"/><rect x="1038.5" y="149.7" width="5" height="3.5" fill="#777"/><rect x="1032" y="154.2" width="5" height="3.5" fill="#777"/><rect x="1038.5" y="154.2" width="5" height="3.5" fill="#777"/><rect x="1033" y="178.5" width="10" height="7" fill="#cfcfcf"/><path d="M1035 178.5 l-2 -6 M1038 178.5 v-7 M1041 178.5 l3 -5" stroke="#cfcfcf" stroke-width="1.5"/><circle cx="1038" cy="171.5" r="1.5" fill="#cfcfcf"/><circle cx="1033" cy="172.5" r="1.3" fill="#cfcfcf"/><circle cx="1044" cy="173.5" r="1.3" fill="#cfcfcf"/><circle cx="1038" cy="199" r="3.3" fill="#cfcfcf"/><circle cx="1034.5" cy="203.5" r="3.3" fill="#cfcfcf"/><circle cx="1041.5" cy="203.5" r="3.3" fill="#cfcfcf"/><path d="M1038 203 l-3 7 h6z" fill="#cfcfcf"/><rect x="1031" y="234" width="14" height="2" fill="#cfcfcf"/><rect x="1031" y="238" width="14" height="2" fill="#cfcfcf"/><rect x="1031" y="242" width="14" height="2" fill="#cfcfcf"/><defs><linearGradient id="rg" x1="0" y1="0" x2="1" y2="0"><stop offset="0" stop-color="#111"/><stop offset="1" stop-color="#f0f0f0"/></linearGradient></defs><rect x="1031.5" y="258" width="13" height="10" fill="url(#rg)" stroke="#cfcfcf" stroke-width="1"/><circle cx="1036" cy="287" r="5" fill="#bdbdbd"/><circle cx="1040" cy="291" r="5" fill="#8a8a8a" stroke="#bdbdbd" stroke-width="0.8"/><circle cx="1038" cy="325" r="5.5" fill="#cfcfcf"/><circle cx="1038" cy="325" r="7.3" stroke="#cfcfcf" stroke-width="1" fill="none" stroke-dasharray="1.2 1.4"/><rect x="1035" y="344" width="10" height="10" stroke="#cfcfcf" stroke-width="1.1" fill="none"/><rect x="1031" y="350" width="6" height="6" stroke="#cfcfcf" stroke-width="1" fill="#777"/><rect x="1025.5" y="376.5" width="25" height="19" fill="#2c2c2c"/><path d="M1031 384 L1038 379.5 L1045 384 L1038 388.5Z" fill="#e8e8e8"/><path d="M1031 387.5 L1038 392 L1045 387.5" stroke="#e8e8e8" stroke-width="1.4" fill="none"/><rect x="1031" y="403.5" width="9" height="9" stroke="#cfcfcf" stroke-width="1.1" fill="none"/><rect x="1035" y="407.5" width="10" height="10" stroke="#cfcfcf" stroke-width="1.1" fill="#5a5a5a"/><path d="M1036 429.6 h-5 v14 h14 v-5 M1037 437.6 L1044 430.6 M1039 429.6 h6 v6" stroke="#cfcfcf" stroke-width="1.5" fill="none"/><rect x="1057" y="70" width="223" height="24" fill="#474747"/><rect x="1057" y="70" width="58" height="24" fill="#535353"/><rect x="1115" y="70" width="1" height="24" fill="#3c3c3c"/><rect x="1185" y="70" width="1" height="24" fill="#3c3c3c"/><rect x="1057" y="93.5" width="223" height="0.8" fill="#3c3c3c"/><rect x="1063" y="125" width="210" height="1" fill="#474747"/><rect x="1063" y="245" width="210" height="1" fill="#474747"/><rect x="1063" y="279" width="210" height="1" fill="#474747"/><rect x="1063" y="313" width="210" height="1" fill="#474747"/><rect x="1063" y="346.4" width="210" height="1" fill="#474747"/><rect x="1063" y="471.9" width="210" height="1" fill="#474747"/><rect x="1173.5" y="158" width="72.5" height="16" rx="2" fill="#3f3f3f"/><path d="M1236 164 L1238.5 166.5 L1241 164" stroke="#d0d0d0" stroke-width="1.2" fill="none"/><rect x="1173.5" y="182.7" width="56" height="16.2" rx="2" fill="#3f3f3f"/><rect x="1230" y="182.7" width="16" height="16.2" rx="2" fill="#474747"/><path d="M1235.5 189 L1238 191.5 L1240.5 189" stroke="#d0d0d0" stroke-width="1.2" fill="none"/><path d="M1264 187 L1260 190.5 L1264 194Z" fill="#6a6a6a"/><rect x="1173.5" y="207.5" width="95" height="18" rx="2.5" fill="none" stroke="#6b6b6b" stroke-width="1"/><rect x="1159.5" y="253.5" width="19.5" height="18.5" rx="2" fill="#2e2e2e"/><path d="M1163 268 v-10.5 h12" stroke="#e0e0e0" stroke-width="2" fill="none"/><path d="M1166 260 h9 M1164 261 v7" stroke="#e0e0e0" stroke-width="0.8" stroke-dasharray="1 1"/><rect x="1189.5" y="256.5" width="13" height="13" fill="none" stroke="#cfcfcf" stroke-width="1"/><path d="M1193.8 256.5 v13 M1198.2 256.5 v13 M1189.5 260.8 h13 M1189.5 265.2 h13" stroke="#cfcfcf" stroke-width="0.9"/><rect x="1216.5" y="256.5" width="13" height="13" fill="#777" stroke="#cfcfcf" stroke-width="1"/><rect x="1217.0" y="257.0" width="2.1" height="2.1" fill="#a8a8a8"/><rect x="1217.0" y="261.2" width="2.1" height="2.1" fill="#a8a8a8"/><rect x="1217.0" y="265.4" width="2.1" height="2.1" fill="#a8a8a8"/><rect x="1219.1" y="259.1" width="2.1" height="2.1" fill="#a8a8a8"/><rect x="1219.1" y="263.3" width="2.1" height="2.1" fill="#a8a8a8"/><rect x="1219.1" y="267.5" width="2.1" height="2.1" fill="#a8a8a8"/><rect x="1221.2" y="257.0" width="2.1" height="2.1" fill="#a8a8a8"/><rect x="1221.2" y="261.2" width="2.1" height="2.1" fill="#a8a8a8"/><rect x="1221.2" y="265.4" width="2.1" height="2.1" fill="#a8a8a8"/><rect x="1223.3" y="259.1" width="2.1" height="2.1" fill="#a8a8a8"/><rect x="1223.3" y="263.3" width="2.1" height="2.1" fill="#a8a8a8"/><rect x="1223.3" y="267.5" width="2.1" height="2.1" fill="#a8a8a8"/><rect x="1225.4" y="257.0" width="2.1" height="2.1" fill="#a8a8a8"/><rect x="1225.4" y="261.2" width="2.1" height="2.1" fill="#a8a8a8"/><rect x="1225.4" y="265.4" width="2.1" height="2.1" fill="#a8a8a8"/><rect x="1227.5" y="259.1" width="2.1" height="2.1" fill="#a8a8a8"/><rect x="1227.5" y="263.3" width="2.1" height="2.1" fill="#a8a8a8"/><rect x="1227.5" y="267.5" width="2.1" height="2.1" fill="#a8a8a8"/><rect x="1152.5" y="287" width="19" height="19" rx="2" fill="#2e2e2e"/><path d="M1158.5 290 v13 M1163.5 290 v13 M1155.5 293.5 h13 M1155.5 299 h13" stroke="#e6e6e6" stroke-width="1.4"/><path d="M1184 290 v13 M1188 290 v13 M1181 294 h12 M1181 299 h8" stroke="#cfcfcf" stroke-width="1.1"/><rect x="1190" y="299" width="6" height="5" fill="#cfcfcf"/><path d="M1191 299 v-2 a2 2 0 0 1 4 0 v2" stroke="#cfcfcf" fill="none"/><rect x="1206" y="287" width="19" height="19" rx="2" fill="#2e2e2e"/><path d="M1210.5 290 v13 M1208.5 294 h9 M1210.5 295 L1216 292" stroke="#e6e6e6" stroke-width="1.3" fill="none"/><path d="M1219 297 l-3 4 h3 l-2 4 l5 -5 h-3 l2 -3z" fill="#e6e6e6"/><rect x="1178" y="320.5" width="18.5" height="18" rx="2" fill="#2e2e2e"/><path d="M1183.5 323 v13" stroke="#e6e6e6" stroke-width="1.3"/><circle cx="1183.5" cy="329.5" r="1.8" fill="#e6e6e6"/><path d="M1187 326.5 h3 a3 3 0 0 1 0 6 h-3" stroke="#e6e6e6" stroke-width="1.6" fill="none"/><path d="M1209 323 v13 M1207.5 325 h3 M1207.5 328 h3 M1207.5 331 h3 M1207.5 334 h3" stroke="#cfcfcf" stroke-width="1"/><path d="M1212.5 326.5 h3 a3 3 0 0 1 0 6 h-3" stroke="#cfcfcf" stroke-width="1.6" fill="none"/><path d="M1235 323 v2.5 M1235 327.5 v2.5 M1235 332 v2.5" stroke="#cfcfcf" stroke-width="2.2"/><path d="M1239 326.5 h3 a3 3 0 0 1 0 6 h-3" stroke="#cfcfcf" stroke-width="1.6" fill="none"/><rect x="1194.5" y="376.5" width="51" height="16" rx="2" fill="#3f3f3f"/><rect x="1066.5" y="404.0" width="11" height="10" rx="1" fill="#4f4f4f" stroke="#a8a8a8" stroke-width="0.9"/><rect x="1066.5" y="425.8" width="11" height="10" rx="1" fill="#4f4f4f" stroke="#a8a8a8" stroke-width="0.9"/><rect x="1066.5" y="446.5" width="11" height="10" rx="1" fill="#4f4f4f" stroke="#a8a8a8" stroke-width="0.9"/><rect x="1066" y="507.8" width="201.5" height="18" rx="2.5" fill="#535353" stroke="#6b6b6b" stroke-width="1"/><rect x="1066" y="535.7" width="201.5" height="18" rx="2.5" fill="#535353" stroke="#6b6b6b" stroke-width="1"/></svg>
<div class="t b" style="left:1065px;top:77.5px;font-size:8.95px;color:#f0f0f0">Свойства</div>
<div class="t b" style="left:1123px;top:77.5px;font-size:9.3px;color:#b4b4b4">Библиотеки</div>
<div class="t sw" style="left:1065px;top:105.6px;font-size:9.4px;color:#d2d2d2">Нет выделения</div>
<div class="t sw" style="left:1065px;top:135.6px;font-size:9.9px;color:#d2d2d2">Документ</div>
<div class="t sw" style="left:1075px;top:160.7px;font-size:9.5px;color:#d2d2d2">Единицы измерения:</div>
<div class="t sw" style="left:1178.5px;top:160.7px;font-size:9.6px;color:#e6e6e6">Пиксели</div>
<div class="t sw" style="left:1079px;top:185.6px;font-size:9.34px;color:#d2d2d2">Монтажная область:</div>
<div class="t sw" style="left:1177px;top:184.7px;font-size:9.6px;color:#e6e6e6">1</div>
<div class="t sw" style="left:1180px;top:211.6px;font-size:9.1px;color:#e6e6e6">Изменить области</div>
<div class="t sw" style="left:1065.5px;top:257.3px;font-size:9.8px;color:#d2d2d2">Линейка и сетки</div>
<div class="t sw" style="left:1065px;top:290.8px;font-size:9.4px;color:#d2d2d2">Направляющие</div>
<div class="t sw" style="left:1065px;top:324.7px;font-size:9.57px;color:#d2d2d2">Параметры привязки</div>
<div class="t sw" style="left:1065px;top:356.2px;font-size:9.77px;color:#d2d2d2">Установки</div>
<div class="t sw" style="left:1072px;top:381.1px;font-size:9.34px;color:#d2d2d2">Перемещение клавишами:</div>
<div class="t sw" style="left:1198px;top:380.2px;font-size:9.6px;color:#e6e6e6">1 px</div>
<div class="t sw" style="left:1082px;top:405.2px;font-size:9.55px;color:#d2d2d2">Использовать границы просмотра</div>
<div class="t sw" style="left:1082px;top:427.0px;font-size:9.55px;color:#d2d2d2">Настройка углов</div>
<div class="t sw" style="left:1082px;top:447.8px;font-size:9.5px;color:#d2d2d2">Настройка обводок и эффектов</div>
<div class="t sw" style="left:1066px;top:488.9px;font-size:9.16px;color:#d2d2d2">Быстрые действия</div>
<div class="t sw" style="left:1066px;width:201.5px;text-align:center;top:511.5px;font-size:9.55px;color:#e6e6e6">Параметры документа</div>
<div class="t sw" style="left:1066px;width:201.5px;text-align:center;top:539.5px;font-size:9.8px;color:#e6e6e6">Установки</div>
</body></html>
